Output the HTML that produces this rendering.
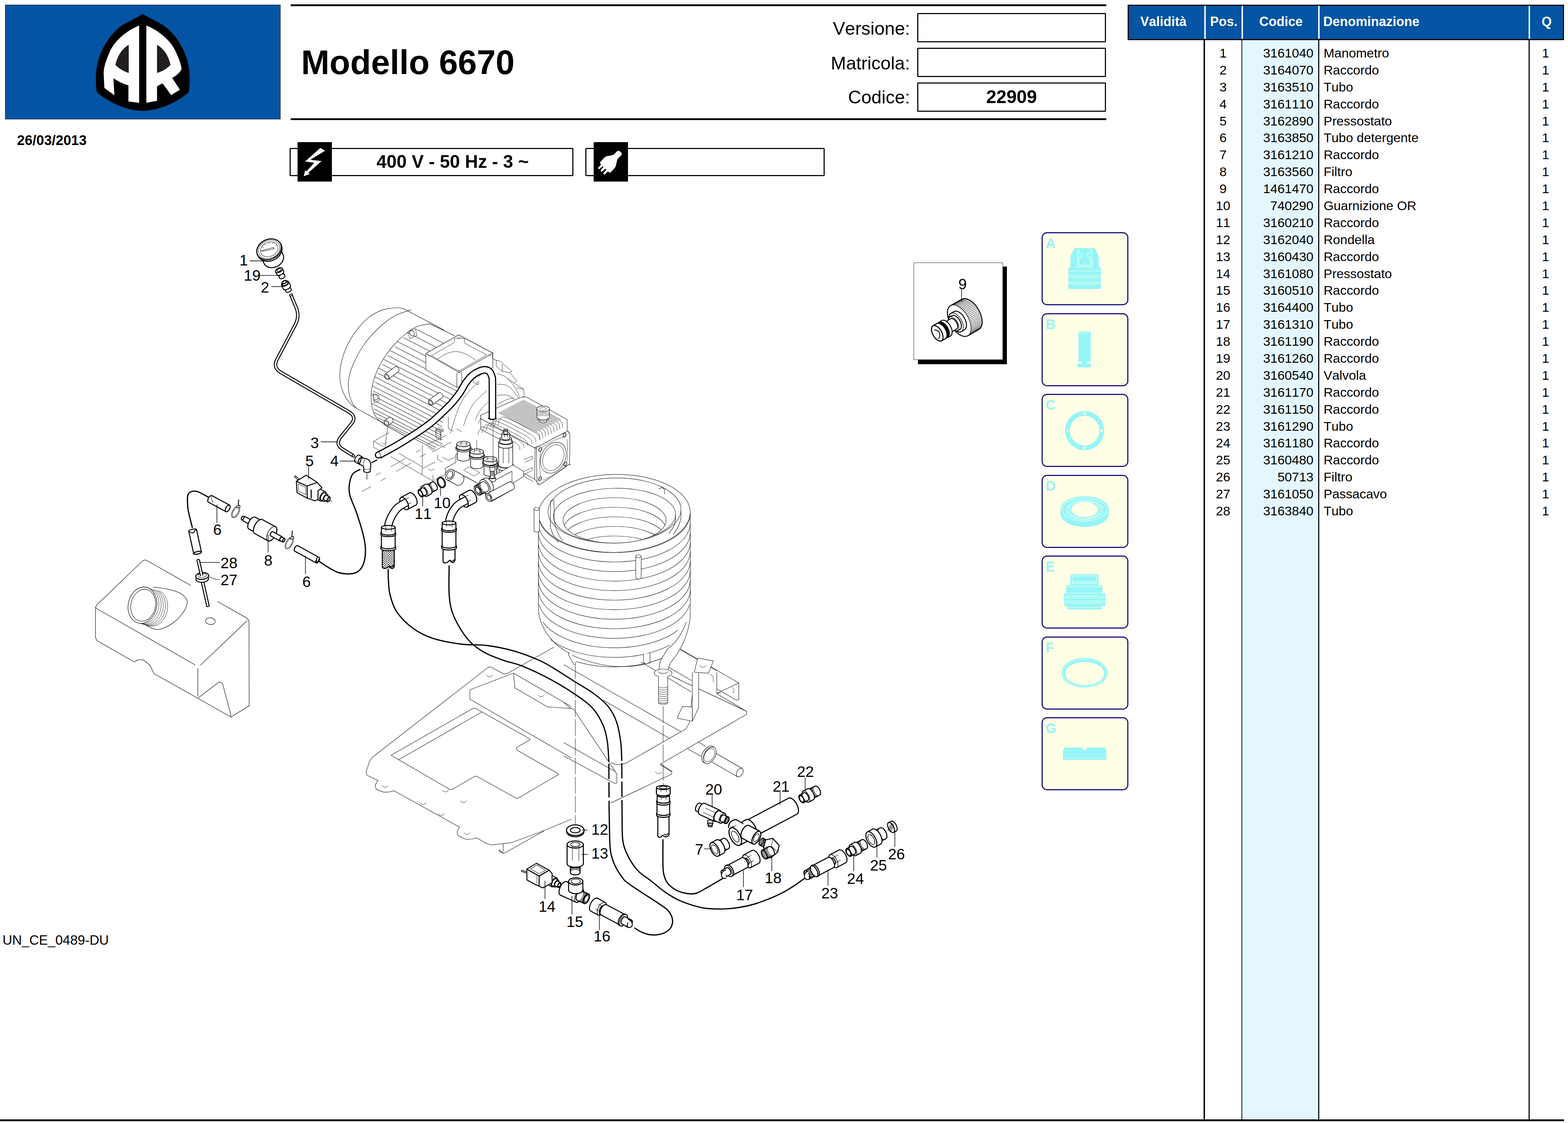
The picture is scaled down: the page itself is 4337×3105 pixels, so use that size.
<!DOCTYPE html>
<html lang="it">
<head>
<meta charset="utf-8">
<title>Modello 6670</title>
<style>
html,body{margin:0;padding:0;background:#fff;}
body{font-kerning:none;width:4337px;height:3105px;position:relative;overflow:hidden;font-family:"Liberation Sans",sans-serif;color:#000;}
.abs{position:absolute;}
#logo{left:14px;top:13px;width:762px;height:317px;background:#0354a3;box-shadow:0 0 0 1px #111 inset;}
.rule{background:#000;height:5px;left:804px;width:2256px;}
#title{left:833px;top:123px;font-size:94px;font-weight:bold;line-height:100px;white-space:nowrap;}
#date{left:47px;top:366px;font-size:38.5px;font-weight:bold;line-height:44px;white-space:nowrap;}
.lbl{width:500px;left:2017px;text-align:right;font-size:50.5px;line-height:64px;white-space:nowrap;}
.inp{left:2537px;width:516px;height:75px;border:3px solid #000;border-radius:2px;text-align:center;font-size:50.5px;font-weight:bold;line-height:73px;}
.vbox{top:409px;height:72px;border:3px solid #000;border-radius:3px;}
.vsq{top:393px;width:95px;height:109px;background:#000;}
#vtxt{left:918px;top:413px;width:668px;text-align:center;font-size:50px;font-weight:bold;line-height:68px;white-space:nowrap;}
#foot{left:7px;top:2578px;font-size:37px;line-height:44px;white-space:nowrap;}
#bottomrule{left:0;top:3095px;width:4326px;height:5px;background:#000;}
/* table */
#thead{left:3119px;top:13px;width:1201px;height:92px;background:#0354a3;border:3px solid #000;}
#thead div{position:absolute;top:0;height:91px;line-height:88px;color:#fff;font-weight:bold;font-size:36px;white-space:nowrap;}
#thead i{position:absolute;top:0;width:4px;height:91px;background:#fff;}
#tbody{left:3119px;top:108px;width:1207px;height:2987px;}
#tbody .col{position:absolute;top:0;height:2987px;}
#tbody .ln{position:absolute;top:0;height:2987px;background:#000;}
.rows{position:absolute;left:0;top:16px;width:1207px;font-size:35.8px;}
.rows div{position:relative;height:46.9px;line-height:47px;white-space:nowrap;}
.rows span{position:absolute;top:0;}
.rows .p{left:214px;width:100px;text-align:center;}
.rows .c{left:316px;width:198px;text-align:right;}
.rows .d{left:542px;}
.rows .q{left:1110px;width:92px;text-align:center;}
/* buttons */
.btn{left:2880.5px;width:234px;height:196px;border:3px solid #0c0c7c;border-radius:15px;background:#ffffe6;}
.btn b{position:absolute;left:9px;top:4px;font-size:38px;line-height:48px;color:#96f5f7;font-weight:bold;}
#p9s{left:2539px;top:737px;width:246px;height:270px;background:#000;}
#p9{left:2527px;top:726px;width:245px;height:267px;background:#fff;border:1.5px solid #222;}
svg{position:absolute;left:0;top:0;overflow:visible;}
</style>
</head>
<body>
<!-- header -->
<div id="logo" class="abs"></div>
<div class="abs rule" style="top:12px"></div>
<div class="abs rule" style="top:327px"></div>
<div id="title" class="abs">Modello 6670</div>
<div id="date" class="abs">26/03/2013</div>
<div class="abs lbl" style="top:47px">Versione:</div>
<div class="abs lbl" style="top:143px">Matricola:</div>
<div class="abs lbl" style="top:237px">Codice:</div>
<div class="abs inp" style="top:36px"></div>
<div class="abs inp" style="top:132px"></div>
<div class="abs inp" style="top:228px">22909</div>
<div class="abs vbox" style="left:801px;width:779px"></div>
<div class="abs vsq" style="left:823px"></div>
<div id="vtxt" class="abs">400 V - 50 Hz - 3 ~</div>
<div class="abs vbox" style="left:1619px;width:656px"></div>
<div class="abs vsq" style="left:1642px"></div>
<div id="foot" class="abs">UN_CE_0489-DU</div>
<div id="bottomrule" class="abs"></div>

<!-- parts table -->
<div id="tbody" class="abs">
<div class="col" style="left:316px;width:212px;background:#e4f7fe"></div>
<div class="ln" style="left:210px;width:4px"></div>
<div class="ln" style="left:314.5px;width:2.5px"></div>
<div class="ln" style="left:527px;width:2.5px"></div>
<div class="ln" style="left:1109px;width:2.5px"></div>
<div class="rows" id="rows">
<div><span class="p">1</span><span class="c">3161040</span><span class="d">Manometro</span><span class="q">1</span></div>
<div><span class="p">2</span><span class="c">3164070</span><span class="d">Raccordo</span><span class="q">1</span></div>
<div><span class="p">3</span><span class="c">3163510</span><span class="d">Tubo</span><span class="q">1</span></div>
<div><span class="p">4</span><span class="c">3161110</span><span class="d">Raccordo</span><span class="q">1</span></div>
<div><span class="p">5</span><span class="c">3162890</span><span class="d">Pressostato</span><span class="q">1</span></div>
<div><span class="p">6</span><span class="c">3163850</span><span class="d">Tubo detergente</span><span class="q">1</span></div>
<div><span class="p">7</span><span class="c">3161210</span><span class="d">Raccordo</span><span class="q">1</span></div>
<div><span class="p">8</span><span class="c">3163560</span><span class="d">Filtro</span><span class="q">1</span></div>
<div><span class="p">9</span><span class="c">1461470</span><span class="d">Raccordo</span><span class="q">1</span></div>
<div><span class="p">10</span><span class="c">740290</span><span class="d">Guarnizione OR</span><span class="q">1</span></div>
<div><span class="p">11</span><span class="c">3160210</span><span class="d">Raccordo</span><span class="q">1</span></div>
<div><span class="p">12</span><span class="c">3162040</span><span class="d">Rondella</span><span class="q">1</span></div>
<div><span class="p">13</span><span class="c">3160430</span><span class="d">Raccordo</span><span class="q">1</span></div>
<div><span class="p">14</span><span class="c">3161080</span><span class="d">Pressostato</span><span class="q">1</span></div>
<div><span class="p">15</span><span class="c">3160510</span><span class="d">Raccordo</span><span class="q">1</span></div>
<div><span class="p">16</span><span class="c">3164400</span><span class="d">Tubo</span><span class="q">1</span></div>
<div><span class="p">17</span><span class="c">3161310</span><span class="d">Tubo</span><span class="q">1</span></div>
<div><span class="p">18</span><span class="c">3161190</span><span class="d">Raccordo</span><span class="q">1</span></div>
<div><span class="p">19</span><span class="c">3161260</span><span class="d">Raccordo</span><span class="q">1</span></div>
<div><span class="p">20</span><span class="c">3160540</span><span class="d">Valvola</span><span class="q">1</span></div>
<div><span class="p">21</span><span class="c">3161170</span><span class="d">Raccordo</span><span class="q">1</span></div>
<div><span class="p">22</span><span class="c">3161150</span><span class="d">Raccordo</span><span class="q">1</span></div>
<div><span class="p">23</span><span class="c">3161290</span><span class="d">Tubo</span><span class="q">1</span></div>
<div><span class="p">24</span><span class="c">3161180</span><span class="d">Raccordo</span><span class="q">1</span></div>
<div><span class="p">25</span><span class="c">3160480</span><span class="d">Raccordo</span><span class="q">1</span></div>
<div><span class="p">26</span><span class="c">50713</span><span class="d">Filtro</span><span class="q">1</span></div>
<div><span class="p">27</span><span class="c">3161050</span><span class="d">Passacavo</span><span class="q">1</span></div>
<div><span class="p">28</span><span class="c">3163840</span><span class="d">Tubo</span><span class="q">1</span></div>
</div>
</div>
<div id="thead" class="abs">
<div style="left:0;width:192px;text-align:center">Validità</div>
<div style="left:213px;width:100px;text-align:center">Pos.</div>
<div style="left:316px;width:210px;text-align:center">Codice</div>
<div style="left:538px">Denominazione</div>
<div style="left:1110px;width:92px;text-align:center">Q</div>
<i style="left:209px"></i><i style="left:312px"></i><i style="left:524px"></i><i style="left:1106px"></i>
</div>

<!-- spare-kit buttons -->
<div class="abs btn" style="top:642px"><b>A</b></div>
<div class="abs btn" style="top:865.5px"><b>B</b></div>
<div class="abs btn" style="top:1089px"><b>C</b></div>
<div class="abs btn" style="top:1312.5px"><b>D</b></div>
<div class="abs btn" style="top:1536px"><b>E</b></div>
<div class="abs btn" style="top:1760px"><b>F</b></div>
<div class="abs btn" style="top:1983px"><b>G</b></div>
<div id="p9s" class="abs"></div>
<div id="p9" class="abs"></div>

<svg id="art" width="4337" height="3105" viewBox="0 0 4337 3105" fill="none" stroke="#000" stroke-linecap="round" stroke-linejoin="round" font-family="Liberation Sans, sans-serif">
<g id="logo-art" transform="translate(200,40) scale(0.1848)" stroke="none">
<path fill="#000" d="M1055,-8 C950,60 820,110 720,180 C540,320 400,560 365,800 C348,900 348,1050 365,1160 C500,1290 800,1442 1055,1442 C1310,1442 1610,1290 1745,1160 C1762,1050 1762,900 1745,800 C1710,560 1570,320 1390,180 C1290,110 1160,60 1055,-8 Z"/>
<path fill="#fff" d="M1000,165 C820,240 640,380 560,560 C500,700 465,800 470,900 L480,1100 L630,1208 L615,955 C700,1010 770,1040 840,1060 L840,1302 L1000,1322 Z"/>
<path fill="#231f20" d="M845,455 C730,520 670,640 645,755 C710,820 780,855 845,875 Z"/>
<path fill="#fff" d="M1108,165 C1290,240 1470,380 1550,560 C1600,670 1630,750 1635,820 C1600,880 1550,920 1495,950 L1610,1125 L1480,1207 L1350,1030 L1268,1075 L1268,1292 L1108,1322 Z"/>
<path fill="#231f20" d="M1268,455 C1385,520 1445,640 1470,755 C1405,820 1335,855 1268,875 Z"/>
</g>
<g id="volt-icon" transform="translate(790,380) scale(0.09255)" stroke="none" fill="#fff">
<path d="M1040,312 L1180,398 L738,668 L1075,705 L680,1055 L720,1090 L540,1158 L585,985 L628,1008 L855,760 L582,718 Z"/>
</g>
<g id="plug-icon" transform="translate(1600,380) scale(0.09255)" stroke="none" fill="#fff">
<path d="M1180,400 C1230,390 1300,450 1295,510 C1270,560 1200,590 1170,650 C1130,720 1140,830 1090,905 L955,1050 C930,1050 900,1030 880,1015 L780,1115 C765,1110 745,1085 745,1065 L835,965 L800,935 L700,1025 C680,1030 665,1020 665,975 L745,885 L725,855 L630,945 C610,950 585,930 580,910 L675,810 C655,790 645,770 645,740 L790,585 C850,540 950,560 1050,510 C1100,480 1130,420 1180,400 Z"/>
</g>
<g id="kits" stroke="none" fill="#96f5f7">
<!-- A: pump head -->
<path d="M2972,686 L3028,686 L3039,708 L3039,738 L3045,741 L3045,796 Q3045,799 3042,799 L2958,799 Q2955,799 2955,796 L2955,741 L2961,738 L2961,708 Z"/>
<g stroke="#f4ffe9" stroke-width="1.6" fill="none">
<path d="M2980,690 L2980,738 L3020,738 L3020,690 M2984,690 L2986,700 L2992,702 L2992,708 L2984,712 L2984,734 L3016,734 L3016,712 L3008,708 L3008,702 L3014,700 L3016,690"/>
<path d="M2957,749 L3043,749 M2957,762 L3043,762 M2957,767 L3043,767 M2957,780 L3043,780 M2957,785 L3043,785"/>
</g>
<!-- B: cylinder -->
<path d="M2983,920 Q2983,917 2986,917 L3014,917 Q3017,917 3017,920 L3017,1000 L3008,1000 L3008,1005 L3017,1005 L3017,1016 L2981,1016 L2981,1005 L2991,1005 L2991,1000 L2983,1000 Z"/>
<path d="M2985,921 L3015,921" stroke="#e8fff0" stroke-width="1.2" fill="none"/>
<!-- C: gasket ring -->
<path fill-rule="evenodd" d="M2946,1190.5 a54,54 0 1,0 108,0 a54,54 0 1,0 -108,0 Z M2959,1190.5 a41,41 0 1,1 82,0 a41,41 0 1,1 -82,0 Z"/>
<g fill="#ffffe6"><circle cx="3000" cy="1143" r="3.4"/><circle cx="3000" cy="1238" r="3.4"/><circle cx="2952.5" cy="1190.5" r="3.4"/><circle cx="3047.500" cy="1190.500" r="3.400"/></g>
<!-- D: seal -->
<path fill-rule="evenodd" d="M2933,1408 a67,36 0 0,1 134,0 L3067,1420 a67,37 0 0,1 -134,0 Z M2963,1409 a37,21 0 1,0 74,0 a37,21 0 1,0 -74,0 Z"/>
<g stroke="#ecfff0" stroke-width="1.6" fill="none"><ellipse cx="3000" cy="1409" rx="62" ry="32"/><ellipse cx="3000" cy="1410" rx="50" ry="27"/><ellipse cx="3000" cy="1410" rx="44" ry="24"/></g>
<!-- E: stacked fitting -->
<path d="M2960,1591 Q2960,1588 2963,1588 L3036,1588 Q3039,1588 3039,1591 L3039,1618 L3049,1618 L3049,1640 L3057,1640 L3057,1676 L3047,1676 L3047,1685 L2952,1685 L2952,1676 L2943,1676 L2943,1640 L2949,1640 L2949,1618 L2960,1618 Z"/>
<g stroke="#ecfff0" stroke-width="1.4" fill="none"><path d="M2962,1592 L3037,1592 M2962,1609 L3037,1609 M2962,1613 L3037,1613 M2951,1622 L3047,1622 M2945,1640 L3055,1640 M2945,1648 L3055,1648 M2945,1653 L3055,1653 M2945,1662 L3055,1662 M2945,1667 L3055,1667 M2954,1680 L3045,1680 M2966,1592 L2966,1608 M3033,1592 L3033,1608"/></g>
<!-- F: O-ring -->
<path fill-rule="evenodd" d="M2936,1860 a64,41 0 1,0 128,0 a64,41 0 1,0 -128,0 Z M2946,1862 a54,32 0 1,1 108,0 a54,32 0 1,1 -108,0 Z"/>
<ellipse cx="3000" cy="1860" rx="60" ry="37" stroke="#ecfff0" stroke-width="1.2" fill="none"/>
<!-- G: plate -->
<path d="M2943,2067 L2994,2067 L2994,2073 L3006,2073 L3006,2067 L3057,2067 L3057,2073 L3060,2073 L3060,2099 Q3060,2101 3058,2101 L2942,2101 Q2940,2101 2940,2099 L2940,2073 L2943,2073 Z"/>
<path d="M2942,2096 L3058,2096" stroke="#ecfff0" stroke-width="1.2" fill="none"/>
</g>
<g id="tank" stroke="#1a1a1a" stroke-width="1.3">
<path d="M539.9,1838.5 L269.6,1684 L264.2,1679.6 L266.6,1673.7 L395.1,1550.1 L401,1548.1 L408.4,1551 L528.1,1619" stroke="#111" stroke-width="1.3" fill="none"/>
<path d="M602,1663.3 L683.2,1709.1 L688.6,1716.5 L689.2,1951.4 L638.9,1982.5 L547.3,1930.7 L426.2,1862.8 L414.3,1839.1 L396.6,1824.4 L381.8,1824.4 L371.5,1830.3 L268.1,1771.2 L264.2,1762.3 L264.2,1681" stroke="#111" stroke-width="1.3" fill="none"/>
<path d="M554.7,1839.1 L683.2,1716.5" stroke="#111" stroke-width="1.3" fill="none"/>
<path d="M547.3,1848 L547.3,1924.8" stroke="#111" stroke-width="1.3" fill="none"/>
<path d="M547.3,1930.2 L606.4,1885.2 L615.3,1889.4 L637.4,1972.1 L638.9,1981.6" stroke="#111" stroke-width="1.3" fill="none"/>
<path d="M423.2,1623.4 C429.1,1624.2 446.8,1625.4 458.7,1627.9 C470.5,1630.3 485,1634 494.1,1638.2 C503.2,1642.4 509.4,1648 513.3,1653 C517.3,1657.9 519,1660.9 517.8,1667.8 C516.5,1674.6 512.8,1685 505.9,1694.3 C499.1,1703.7 487.2,1716.3 476.4,1723.9 C465.6,1731.5 450.8,1738.2 440.9,1740.1 C431.1,1742.1 424.7,1738.4 417.3,1735.7 C409.9,1733 400.1,1725.9 396.6,1723.9" stroke="#111" stroke-width="1.3" fill="none"/>
<ellipse cx="394" cy="1673.4" rx="39.3" ry="50.5" transform="rotate(12 394 1673.4)" stroke="#1a1a1a" stroke-width="1.3" fill="#fff"/>
<path d="M441,1634.1 L447.7,1638.3 L453.5,1644.1 L458.1,1651.3 L461.5,1659.7 L463.4,1668.9 L463.8,1678.7 L462.6,1688.5 L460,1698 L456,1706.9 L450.7,1714.8 L444.5,1721.4 L437.4,1726.5 L429.8,1729.9 L422,1731.4 L414.3,1730.9 L406.9,1728.6" stroke="#1a1a1a" stroke-width="1" fill="none"/>
<path d="M435,1632.5 L441.7,1636.7 L447.5,1642.5 L452.1,1649.7 L455.5,1658.1 L457.4,1667.3 L457.8,1677.1 L456.6,1686.9 L454,1696.4 L450,1705.3 L444.7,1713.2 L438.5,1719.8 L431.4,1724.9 L423.8,1728.3 L416,1729.8 L408.3,1729.3 L400.9,1727" stroke="#1a1a1a" stroke-width="1" fill="none"/>
<path d="M429,1630.9 L435.7,1635.1 L441.5,1640.9 L446.1,1648.1 L449.5,1656.5 L451.4,1665.7 L451.8,1675.5 L450.6,1685.3 L448,1694.8 L444,1703.7 L438.7,1711.6 L432.5,1718.2 L425.4,1723.3 L417.8,1726.7 L410,1728.2 L402.3,1727.7 L394.9,1725.4" stroke="#1a1a1a" stroke-width="1" fill="none"/>
<path d="M423,1629.3 L429.7,1633.5 L435.5,1639.3 L440.1,1646.5 L443.5,1654.9 L445.4,1664.1 L445.8,1673.9 L444.6,1683.7 L442,1693.2 L438,1702.1 L432.7,1710 L426.5,1716.6 L419.4,1721.7 L411.8,1725.1 L404,1726.6 L396.3,1726.1 L388.9,1723.8" stroke="#1a1a1a" stroke-width="1" fill="none"/>
<path d="M417,1627.7 L423.7,1631.9 L429.5,1637.7 L434.1,1644.9 L437.5,1653.3 L439.4,1662.5 L439.8,1672.3 L438.6,1682.1 L436,1691.6 L432,1700.5 L426.7,1708.4 L420.5,1715 L413.4,1720.1 L405.8,1723.5 L398,1725 L390.3,1724.5 L382.9,1722.2" stroke="#1a1a1a" stroke-width="1" fill="none"/>
<ellipse cx="394" cy="1673.4" rx="39.3" ry="50.5" transform="rotate(12 394 1673.4)" stroke="#1a1a1a" stroke-width="1.3" fill="#fff"/>
<ellipse cx="396" cy="1673.4" rx="34" ry="44.5" transform="rotate(12 396 1673.4)" stroke="#1a1a1a" stroke-width="1.3" fill="#fff"/>
<ellipse cx="581.9" cy="1717.4" rx="13.3" ry="9.5" transform="rotate(8 581.9 1717.4)" stroke="#111" stroke-width="1.3" fill="none"/>
</g>
<g id="frame" stroke="#1a1a1a" stroke-width="1.2">
<path d="M1402.6,1862.6 L1393.1,1863.4 L1359.2,1845 L1355.2,1844.2 L1349.8,1845.6 L1030.1,2093.7 L1022,2105.1 L1012.5,2134.9 L1013.9,2141.6 L1016.6,2144.3 L1045,2157.9 L1038.2,2170.1 L1039.1,2178.2 L1042.3,2183.6 L1061.3,2190.4 L1077.5,2189.6 L1089.7,2186.3 L1271.2,2286.9 L1264.4,2297.7 L1265,2305.9 L1268.5,2311.3 L1288.8,2320.8 L1305.1,2320 L1318.6,2316.7 L1344.3,2331.6 L1359.2,2336.2 L1413.4,2330.2 L1494.7,2300.5 L1580,2265.2" stroke="#1a1a1a" stroke-width="1.2" fill="none"/>
<path d="M1402.6,1862.6 L1548.8,1780" stroke="#1a1a1a" stroke-width="1.2" fill="none"/>
<path d="M1391.7,2333 L1391.7,2354.6 M1380.9,2349.2 L1393.1,2360 L1504.2,2297.7 M1380.9,2349.2 L1380.9,2354.1 L1393.1,2360" stroke="#1a1a1a" stroke-width="1.2" fill="none"/>
<path d="M1420.2,1861.3 L1301,1906.8 L1299.6,1910 L1299.6,1933 L1580,2095.6" stroke="#1a1a1a" stroke-width="1.2" fill="none"/>
<path d="M1420.2,1861.3 L1424.2,1901.9 L1515,1954.7 L1580,1958.8" stroke="#1a1a1a" stroke-width="1.2" fill="none"/>
<path d="M1420.2,1861.3 L1580,1953.4" stroke="#1a1a1a" stroke-width="1.2" fill="none"/>
<path d="M1315.9,1958.8 L1309.1,1958.2 L1081.6,2088.3 L1244.1,2182.8 L1250.9,2182.8 L1313.2,2146.2 L1320,2147 L1427,2206.6 L1433.7,2206.6 L1544.8,2141.6 L1543.4,2138.9 L1429.7,2073.9 L1428.3,2067.1 L1466.2,2045.5 L1464.9,2042.8 Z" stroke="#1a1a1a" stroke-width="1.2" fill="none"/>
<path d="M1332.1,1969.1 L1101.9,2101" stroke="#1a1a1a" stroke-width="1.2" fill="none"/>
<path d="M1345.8,1866.2 a8,5 0 0 0 16,0 M1488.8,1921.2 a8,5 0 0 0 16,0 M1056.5,2171.8 a8,5 0 0 0 16,0 M1223.9,2184.5 a8,5 0 0 0 16,0 M1274,2213.8 a8,5 0 0 0 16,0 M1161.6,2219.5 a8,5 0 0 0 16,0 M1212.5,2249.3 a8,5 0 0 0 16,0 M1283.5,2302.2 a8,5 0 0 0 16,0 M1813.4,2134.4 a8,5 0 0 0 16,0" stroke="#1a1a1a" stroke-width="1" fill="none"/>
<path d="M1879.6,1793.5 L2043.5,1888.4 L2043.5,1934.4 L2036.7,1935.8 L1982.6,1904.6" stroke="#1a1a1a" stroke-width="1.2" fill="none"/>
<path d="M1982.6,1916.8 L2043.5,1888.4 M1982.6,1858.6 L1982.6,1916.8 L1993.4,1915.4 M1882.3,1796.8 L1982.6,1854.5" stroke="#1a1a1a" stroke-width="1.2" fill="none"/>
<path d="M1963.6,1865.3 C1965,1866 1970.2,1866 1971.7,1869.4 C1973.3,1872.8 1972.9,1882.9 1973.1,1885.6" stroke="#1a1a1a" stroke-width="1" fill="none"/>
<path d="M2024.6,1899.2 C2025.5,1900.5 2029.5,1904.4 2030,1907.3 C2030.4,1910.2 2027.7,1915.2 2027.3,1916.8" stroke="#1a1a1a" stroke-width="1" fill="none"/>
<path d="M1560,1838.2 L1882.3,2022.4" stroke="#1a1a1a" stroke-width="1.2" fill="none"/>
<path d="M1668.4,1935.8 L1851.2,2041.4" stroke="#1a1a1a" stroke-width="1.2" fill="none"/>
<path d="M1803.8,1817.9 L1912.1,1881.6 M1765.9,1826 L1912.1,1912.7" stroke="#1a1a1a" stroke-width="1.2" fill="none"/>
<path d="M1858,1869.4 L2065.2,1966.9 L2065.2,1975 M1982.6,1918.1 L2065.2,1966.9" stroke="#1a1a1a" stroke-width="1.2" fill="none"/>
<path d="M1914.9,1920.9 C1913.9,1929 1910.8,1957 1909.4,1969.6 C1908.1,1982.3 1909,1989 1906.7,1996.7 C1904.5,2004.4 1900,2011.2 1895.9,2015.7 C1891.8,2020.2 1884.6,2022.4 1882.3,2023.8 M1882.3,2023.8 L1733.4,2109.1 M1733.4,2109.1 C1729.8,2110 1718.9,2114.5 1711.7,2114.5 C1704.5,2114.5 1693.6,2110 1690,2109.1" stroke="#1a1a1a" stroke-width="1.2" fill="none"/>
<path d="M2065.2,1975 L1826.8,2112.6 L1858,2132.1 L1858,2140.3 L1690,2219.9" stroke="#1a1a1a" stroke-width="1.2" fill="none"/>
<path d="M1826.8,2112.6 L1826.8,2114.8 L1858,2134.3" stroke="#1a1a1a" stroke-width="1.2" fill="none"/>
<path d="M1560,1942.5 L1576.3,1957.4 L1587.1,1961.5" stroke="#1a1a1a" stroke-width="1.2" fill="none"/>
<path d="M1587.1,1961.5 L1706.3,2140.3 L1706.3,2164.6 L1699.5,2166 L1560,2090.2" stroke="#1a1a1a" stroke-width="1.2" fill="none"/>
<path d="M1560,2053.6 L1699.5,2132.1" stroke="#1a1a1a" stroke-width="1.2" fill="none"/>
<path d="M1929.8,1819.3 L1973.1,1827.4 L1959.5,1861.3 L1920.3,1858.6 Z" stroke="#1a1a1a" stroke-width="1.2" fill="#fff"/>
<path d="M1935.2,1839.6 a9,5 0 0 0 18,0" stroke="#1a1a1a" stroke-width="1" fill="none"/>
<path d="M1914.9,1858.6 L1914.9,1994 L1932.5,1956.1 L1932.5,1861.3" stroke="#1a1a1a" stroke-width="1.2" fill="#fff"/>
<path d="M1887.8,1953.4 L1914.9,1954.7 L1914.9,1994 L1874.2,1985.9 L1874.2,1981.8 Z" stroke="#1a1a1a" stroke-width="1.2" fill="#fff"/>
<path d="M1931.1,2050.9 L1950.1,2063.1 M1901.3,2069.8 L1939.2,2091.5" stroke="#1a1a1a" stroke-width="1.2" fill="none"/>
<path d="M2052.8,2124.8 L1966.2,2074.8 A13.2,8.7 -60 0 0 1953,2097.6 L2039.6,2147.6 A13.2,8.7 -60 0 0 2052.8,2124.8 Z" stroke="#000" stroke-width="1.2" fill="#fff"/>
<path d="M2052.8,2124.8 A13.2,8.7 -60 0 0 2039.6,2147.6" stroke="#000" stroke-width="1.2" fill="none"/>
<path d="M1975.7,2066.4 L1971.3,2063.9 A25.5,15.8 -60 0 0 1945.8,2108 L1950.2,2110.5 A25.5,15.8 -60 0 0 1975.7,2066.4 Z" stroke="#000" stroke-width="1.2" fill="#fff"/>
<path d="M1975.7,2066.4 A25.5,15.8 -60 0 0 1950.2,2110.5" stroke="#000" stroke-width="1.2" fill="none"/>
<ellipse cx="1961.9" cy="2087.9" rx="12.5" ry="20" transform="rotate(30 1961.9 2087.9)" stroke="#1a1a1a" stroke-width="1" fill="none"/>
<path d="M1591.3,1830 L1591.3,2285" stroke="#1a1a1a" stroke-width="1.1" fill="none" stroke-dasharray="46 7 "/>
<path d="M1834.3,1953 L1834.3,2172" stroke="#1a1a1a" stroke-width="1.1" fill="none" stroke-dasharray="46 7"/>
</g>
<g id="motor" stroke="#1a1a1a" stroke-width="1.25">
<path d="M1117,854 C1113.8,853.5 1107.2,850.3 1097.3,850.8 C1087.5,851.3 1071.1,852.2 1057.9,856.9 C1044.8,861.7 1030.8,869.3 1018.5,879.1 C1006.2,889 994.3,902.1 984,916.1 C973.8,930 963.9,946.8 956.9,962.9 C950,978.9 944.8,996.9 942.2,1012.1 C939.5,1027.3 939.3,1040.8 940.9,1054 C942.6,1067.1 947.3,1080.7 952,1090.9 C956.7,1101.2 963.5,1109.2 969.3,1115.6 C975,1121.9 983.6,1126.8 986.5,1129.1" stroke="#1a1a1a" stroke-width="1.2" fill="none"/>
<path d="M1136.7,856.9 C1129.4,859.6 1107.2,864.7 1092.4,873 C1077.6,881.2 1062,893.3 1048.1,906.2 C1034.1,919.1 1020.2,934.5 1008.7,950.5 C997.2,966.5 986.5,985.8 979.1,1002.3 C971.7,1018.7 966.6,1034.7 964.3,1049.1 C962.1,1063.4 963.7,1077.4 965.6,1088.5 C967.4,1099.6 971.9,1108.8 975.4,1115.6 C978.9,1122.3 984.7,1126.8 986.5,1129.1" stroke="#1a1a1a" stroke-width="1.2" fill="none"/>
<path d="M1117,854 L1227.9,912.4" stroke="#1a1a1a" stroke-width="1.2" fill="none"/>
<path d="M986.5,1129.1 L1061.6,1171" stroke="#1a1a1a" stroke-width="1.2" fill="none"/>
<path d="M1188.5,895.1 C1182.3,896.6 1162.6,899 1151.5,903.7 C1140.4,908.5 1131.8,915.6 1122,923.4 C1112.1,931.2 1101.9,940.3 1092.4,950.5 C1083,960.8 1073.5,972.7 1065.3,985 C1057.1,997.3 1049.1,1010.9 1043.2,1024.4 C1037.2,1038 1032.4,1054.8 1029.6,1066.3 C1026.8,1077.8 1026.4,1083.1 1026.4,1093.4 C1026.4,1103.7 1026.8,1117.2 1029.6,1127.9 C1032.4,1138.5 1036.8,1149.2 1043.2,1157.4 C1049.5,1165.6 1063.7,1173.9 1067.8,1177.1" stroke="#1a1a1a" stroke-width="1.2" fill="#fff"/>
<path d="M1188.5,895.1 L1257.4,928.4" stroke="#1a1a1a" stroke-width="1.2" fill="none"/>
<path d="M1067.8,1177.1 L1131.8,1211.6" stroke="#1a1a1a" stroke-width="1.2" fill="none"/>
<path d="M1150.5,909.7 L1284,978.4 M1127.7,919.6 L1265.6,990.7 M1117.2,934.2 L1250.7,1002.9 M1099.4,944.2 L1237.3,1015.2 M1092.2,958.7 L1225.7,1027.5 M1078.1,968.7 L1272.7,1068.9 M1072.9,983.2 L1263.1,1081.2 M1060.7,993.2 L1255.3,1093.4 M1058.2,1007.8 L1248.4,1105.7 M1046.9,1017.7 L1241.5,1117.9 M1045.8,1032.3 L1235.9,1130.2 M1037.4,1042.3 L1232,1142.5 M1037.8,1056.8 L1228,1154.7 M1029.5,1066.8 L1224.1,1167 M1032.5,1081.3 L1222.7,1179.3 M1026.6,1091.3 L1221.2,1191.5 M1031.8,1105.8 L1221.9,1203.8 M1028.5,1115.8 L1223.1,1216 M1034.1,1130.4 L1224,1228.2 M1035.3,1140.4 L1214.9,1232.8 M1045.4,1154.9 L1205.8,1237.5 M1052.5,1164.9 L1202.6,1242.2" stroke="#1a1a1a" stroke-width="1.1" fill="none"/>
<path d="M1074.7,1048.3 L1102.3,1027.6 A8.3,6 53.1 0 0 1092.4,1014.3 L1064.8,1035 A8.3,6 53.1 0 0 1074.7,1048.3 Z" stroke="#000" stroke-width="1.2" fill="#fff"/>
<path d="M1074.7,1048.3 A8.3,6 53.1 0 0 1064.8,1035" stroke="#000" stroke-width="1.2" fill="none"/>
<ellipse cx="1069.8" cy="1041.7" rx="4.2" ry="5.5" transform="rotate(-35 1069.8 1041.7)" stroke="#1a1a1a" stroke-width="1" fill="none"/>
<path d="M1195.9,1119.7 L1223.5,1099 A8.3,6 53.1 0 0 1213.5,1085.8 L1186,1106.5 A8.3,6 53.1 0 0 1195.9,1119.7 Z" stroke="#000" stroke-width="1.2" fill="#fff"/>
<path d="M1195.9,1119.7 A8.3,6 53.1 0 0 1186,1106.5" stroke="#000" stroke-width="1.2" fill="none"/>
<ellipse cx="1190.9" cy="1113.1" rx="4.2" ry="5.5" transform="rotate(-35 1190.9 1113.1)" stroke="#1a1a1a" stroke-width="1" fill="none"/>
<path d="M1074,1176.4 L1085.8,1167.5 A8.3,6 53.1 0 0 1075.9,1154.2 L1064,1163.1 A8.3,6 53.1 0 0 1074,1176.4 Z" stroke="#000" stroke-width="1.2" fill="#fff"/>
<path d="M1074,1176.4 A8.3,6 53.1 0 0 1064,1163.1" stroke="#000" stroke-width="1.2" fill="none"/>
<ellipse cx="1069" cy="1169.7" rx="4.2" ry="5.5" transform="rotate(-35 1069 1169.7)" stroke="#1a1a1a" stroke-width="1" fill="none"/>
<ellipse cx="1139.7" cy="921.5" rx="6" ry="8" transform="rotate(-35 1139.7 921.5)" stroke="#1a1a1a" stroke-width="1.2" fill="#fff"/>
<path d="M1128.1,917.3 L1149.1,908.7 L1152.8,928.4 L1134.3,935.8 Z" stroke="#1a1a1a" stroke-width="1" fill="none"/>
<ellipse cx="1038.7" cy="1098.3" rx="6" ry="8" transform="rotate(-35 1038.7 1098.3)" stroke="#1a1a1a" stroke-width="1.2" fill="#fff"/>
<path d="M1032.1,1088.5 L1048.1,1093.4 L1049.3,1108.2 L1035.8,1114.3 Z" stroke="#1a1a1a" stroke-width="1" fill="none"/>
<path d="M1177.9,977.6 L1268.5,925.9 L1363.3,976.4 L1363.3,1017 L1277.1,1066.3 L1263.6,1071.2 L1177.9,1022 Z" stroke="#1a1a1a" stroke-width="1.2" fill="#fff"/>
<path d="M1177.9,977.6 L1268.5,925.9 L1363.3,976.4 L1269.7,1029.4 Z" stroke="#1a1a1a" stroke-width="1.2" fill="#fff"/>
<path d="M1193.4,983.1 L1256.9,946.8 L1256.9,935.8 L1284.5,935.8 L1284.5,948.1 L1346.1,981.3 L1272.2,1024.4 L1266.1,1024.4 Z" stroke="#1a1a1a" stroke-width="1" fill="none"/>
<path d="M1263.6,1031.8 L1263.6,1071.2" stroke="#1a1a1a" stroke-width="1.2" fill="none"/>
<path d="M1277.1,1029.4 L1277.1,1066.3" stroke="#1a1a1a" stroke-width="1.2" fill="none"/>
<path d="M1210.6,992.4 C1213.9,990.4 1223.4,983.4 1230.3,980.1 C1237.3,976.8 1245.1,973.7 1252.5,972.7 C1259.9,971.7 1267.7,972.3 1274.7,973.9 C1281.7,975.6 1287.8,979.1 1294.4,982.6 C1300.9,986 1310.8,992.8 1314.1,994.9" stroke="#1a1a1a" stroke-width="1" fill="none"/>
<path d="M1183.2,980.6 a4,2.5 0 0 0 8,0" stroke="#1a1a1a" stroke-width="0.9" fill="none"/>
<path d="M1265.7,932.8 a4,2.5 0 0 0 8,0" stroke="#1a1a1a" stroke-width="0.9" fill="none"/>
<path d="M1349.5,980.1 a4,2.5 0 0 0 8,0" stroke="#1a1a1a" stroke-width="0.9" fill="none"/>
<path d="M1265.7,1028.1 a4,2.5 0 0 0 8,0" stroke="#1a1a1a" stroke-width="0.9" fill="none"/>
<path d="M1362.2,974.8 L1362.2,992.9 L1372.7,995.8 L1383.2,998.7 L1390.9,1005.7 L1415.7,1026.4 L1410,1030.2 L1429.1,1053.1 L1421.4,1058.8 L1448.1,1076 L1450.1,1095.1 L1440.5,1099.8" stroke="#1a1a1a" stroke-width="1" fill="none"/>
<path d="M1372.7,995.8 L1372.7,1013 L1389,1026.4 L1389,1007.3 M1389,1026.4 L1410,1030.2 M1402.3,1045.4 L1421.4,1058.8 M1429.1,1072.2 L1448.1,1076" stroke="#1a1a1a" stroke-width="1" fill="none"/>
<path d="M1375.6,1034 C1378.8,1034.9 1388.3,1035.9 1394.7,1039.7 C1401.1,1043.5 1408.1,1050.2 1413.8,1056.9 C1419.5,1063.6 1425.2,1073.1 1429.1,1079.8 C1432.9,1086.5 1435.4,1094.1 1436.7,1097" stroke="#1a1a1a" stroke-width="1" fill="none"/>
<path d="M1375.6,1062.6 C1379.4,1062.9 1391.8,1062.3 1398.5,1064.5 C1405.2,1066.8 1410.9,1071.5 1415.7,1076 C1420.5,1080.4 1423.3,1086.5 1427.1,1091.3 C1431,1096 1436.7,1102.4 1438.6,1104.6" stroke="#1a1a1a" stroke-width="1" fill="none"/>
<path d="M1375.6,1093.2 C1379.4,1093 1392.2,1091.4 1398.5,1092.2 C1404.9,1093 1409.6,1095.7 1413.8,1097.9 C1417.9,1100.2 1421.7,1104.3 1423.3,1105.6" stroke="#1a1a1a" stroke-width="1" fill="none"/>
<path d="M1375.6,1118 C1380.1,1115.7 1394.7,1107.5 1402.3,1104.6 C1410,1101.7 1418.2,1101.4 1421.4,1100.8" stroke="#1a1a1a" stroke-width="1" fill="none"/>
<path d="M1322.2,1056.9 C1318.3,1060.7 1306.3,1071.8 1299.3,1079.8 C1292.3,1087.8 1285.9,1095.1 1280.2,1104.6 C1274.4,1114.2 1269,1126.9 1264.9,1137.1 C1260.8,1147.2 1258.5,1155.5 1255.4,1165.7 C1252.2,1175.9 1247.4,1192.7 1245.8,1198.1" stroke="#1a1a1a" stroke-width="1" fill="none"/>
<path d="M1347,1079.8 C1343.2,1083.3 1330.8,1094.1 1324.1,1100.8 C1317.4,1107.5 1312.3,1111.6 1306.9,1119.9 C1301.5,1128.2 1295.8,1140.9 1291.6,1150.4 C1287.5,1160 1283.7,1172.7 1282.1,1177.1" stroke="#1a1a1a" stroke-width="1" fill="none"/>
<path d="M1352.7,1110.3 C1350.2,1112.6 1342.2,1118.6 1337.4,1123.7 C1332.7,1128.8 1327.9,1134.5 1324.1,1140.9 C1320.3,1147.2 1316.1,1158.4 1314.5,1161.9" stroke="#1a1a1a" stroke-width="1" fill="none"/>
<path d="M1350.8,1140.9 C1347.9,1142.8 1338.4,1147.6 1333.6,1152.3 C1328.8,1157.1 1324.1,1166.6 1322.2,1169.5" stroke="#1a1a1a" stroke-width="1" fill="none"/>
<path d="M1309.8,1049.3 L1309.8,1056.9 L1322.2,1064.5 L1322.2,1053.1 M1205.7,1190.5 L1205.7,1209.6 L1219.1,1217.2 L1219.1,1196.2 L1205.7,1190.5 L1213.4,1185.7 L1226.7,1192.4 L1219.1,1196.2" stroke="#1a1a1a" stroke-width="1" fill="none"/>
<path d="M1240.1,1152.3 L1240.1,1184.8 L1253.4,1192.4 M1263,1186.7 L1276.4,1193.4" stroke="#1a1a1a" stroke-width="1" fill="none"/>
<path d="M1073,1177.7 L1064.7,1236.8 M1033.3,1236.8 L1033.3,1220.2 L1075.8,1196.2 M1033.3,1220.2 L1061,1235 M1033.3,1236.8 L1059.1,1250.7" stroke="#1a1a1a" stroke-width="1" fill="none"/>
<path d="M1055.4,1223 a7,4 0 0 0 14,0" stroke="#1a1a1a" stroke-width="0.9" fill="none"/>
<path d="M1081.3,1262.7 L1167.2,1312.6 L1197.7,1330.1 L1231,1311.7 M1167.2,1312.6 L1167.2,1296 L1203.2,1277.5 M1197.7,1330.1 L1197.7,1313.5 M1103.5,1253.5 L1167.2,1290.4" stroke="#1a1a1a" stroke-width="1" fill="none"/>
<path d="M1184.8,1296 a8,4.5 0 0 0 16,0" stroke="#1a1a1a" stroke-width="0.9" fill="none"/>
<path d="M1205.1,1187 L1205.1,1201.7 L1218,1209.1 L1218,1193.4 Z M1205.1,1187 L1214.3,1181.4 L1227.3,1188.8 L1218,1193.4 M1210.6,1257.2 L1210.6,1270.1 L1223.6,1277.5 M1223.6,1264.6 L1240.2,1272.9 L1258.7,1262.7" stroke="#1a1a1a" stroke-width="1" fill="none"/>
<path d="M1081.3,1290.4 L1121.9,1267.3 M1096.1,1303.4 L1136.7,1280.3 M1000,1358.8 L1025.9,1345.8 M1039.7,1314.4 L1052.7,1307 M1053.6,1329.2 L1066.5,1321.8 M1150.6,1250.7 L1162.6,1243.3 M1162.6,1262.7 L1177.4,1255.3 M1181.1,1229.4 L1234.6,1203.6 M1195.8,1249.8 L1247.6,1222.1 M1184.8,1236.8 L1199.5,1246.1 M1216.2,1229.4 L1231,1237.8" stroke="#1a1a1a" stroke-width="1" fill="none"/>
<path d="M1014.8,1310.7 L1014.8,1325.5 M1168.1,1231.3 L1168.1,1294.1" stroke="#1a1a1a" stroke-width="1" fill="none"/>
</g>
<g id="pump" stroke="#1a1a1a" stroke-width="1.2">
<path d="M1329.8,1147.8 L1440.6,1098.5 L1455.4,1097.3 L1568.7,1160.1 L1568.7,1197 L1485,1241.4 L1329.8,1157.6 Z" stroke="#1a1a1a" stroke-width="1.2" fill="#fff"/>
<path d="M1329.8,1147.8 L1329.8,1187.2 L1386.4,1216.7" stroke="#1a1a1a" stroke-width="1.2" fill="none"/>
<path d="M1379.1,1140.9 C1387.9,1145.4 1414.4,1159.1 1432,1168.2 C1449.7,1177.3 1475.1,1189.9 1485,1195.6 C1494.8,1201.3 1489.7,1199.3 1491.1,1202.5 C1492.6,1205.7 1493.2,1212.7 1493.6,1214.8 M1383,1138.9 L1487.4,1192.9 M1386.9,1136.8 C1395.8,1141.4 1422.2,1155 1439.9,1164.2 C1457.5,1173.3 1483,1185.8 1492.8,1191.5 C1502.7,1197.2 1497.6,1195.2 1499,1198.4 C1500.4,1201.6 1501.1,1208.7 1501.5,1210.7 M1390.9,1134.8 L1495.3,1188.8 M1394.8,1132.8 C1403.6,1137.3 1430.1,1151 1447.8,1160.1 C1465.4,1169.2 1490.9,1181.7 1500.7,1187.4 C1510.6,1193.1 1505.5,1191.1 1506.9,1194.3 C1508.3,1197.5 1508.9,1204.6 1509.4,1206.6 M1398.8,1130.8 L1503.2,1184.7 M1402.7,1128.7 C1411.5,1133.2 1438,1146.9 1455.7,1156 C1473.3,1165.1 1498.8,1177.7 1508.6,1183.4 C1518.5,1189.1 1513.3,1187.1 1514.8,1190.3 C1516.2,1193.5 1516.8,1200.5 1517.2,1202.6 M1406.6,1126.7 L1511.1,1180.7 M1410.6,1124.6 C1419.4,1129.2 1445.9,1142.9 1463.5,1152 C1481.2,1161.1 1506.6,1173.6 1516.5,1179.3 C1526.3,1185 1521.2,1183 1522.7,1186.2 C1524.1,1189.4 1524.7,1196.5 1525.1,1198.5 M1414.5,1122.7 L1519,1176.6 M1418.5,1120.6 C1427.3,1125.1 1453.8,1138.8 1471.4,1147.9 C1489.1,1157 1514.5,1169.5 1524.4,1175.2 C1534.2,1180.9 1529.1,1178.9 1530.5,1182.1 C1532,1185.3 1532.6,1192.4 1533,1194.5 M1422.4,1118.6 L1526.8,1172.5 M1426.3,1116.5 C1435.2,1121.1 1461.7,1134.7 1479.3,1143.8 C1497,1153 1522.4,1165.5 1532.3,1171.2 C1542.1,1176.9 1537,1174.9 1538.4,1178.1 C1539.9,1181.3 1540.5,1188.3 1540.9,1190.4 M1430.3,1114.5 L1534.7,1168.5 M1434.2,1112.4 C1443.1,1117 1469.5,1130.7 1487.2,1139.8 C1504.8,1148.9 1530.3,1161.4 1540.1,1167.1 C1550,1172.8 1544.9,1170.8 1546.3,1174 C1547.7,1177.2 1548.3,1184.3 1548.8,1186.3 M1438.2,1110.5 L1542.6,1164.4 M1442.1,1108.4 C1450.9,1112.9 1477.4,1126.6 1495.1,1135.7 C1512.7,1144.8 1538.2,1157.3 1548,1163.1 C1557.9,1168.8 1552.7,1166.7 1554.2,1169.9 C1555.6,1173.1 1556.2,1180.2 1556.6,1182.3 M1446.1,1106.4 L1550.5,1160.3" stroke="#1a1a1a" stroke-width="1" fill="none"/>
<path d="M1322.4,1202 C1323.2,1199.5 1323.6,1190.5 1327.3,1187.2 C1331,1183.9 1328.2,1176.1 1344.6,1182.3 C1361,1188.4 1410.3,1213.9 1425.9,1224.1 C1441.5,1234.4 1436.1,1240.6 1438.2,1243.8 M1333.5,1196.5 C1334.3,1194.1 1334.7,1185.1 1338.4,1181.8 C1342.1,1178.5 1339.2,1170.7 1355.7,1176.8 C1372.1,1183 1421.3,1208.5 1436.9,1218.7 C1452.5,1229 1447.2,1235.1 1449.3,1238.4 M1344.6,1191.1 C1345.4,1188.7 1345.8,1179.6 1349.5,1176.4 C1353.2,1173.1 1350.3,1165.3 1366.7,1171.4 C1383.2,1177.6 1432.4,1203 1448,1213.3 C1463.6,1223.6 1458.3,1229.7 1460.3,1233 M1355.7,1185.7 C1356.5,1183.2 1356.9,1174.2 1360.6,1170.9 C1364.3,1167.6 1361.4,1159.8 1377.8,1166 C1394.2,1172.2 1443.5,1197.6 1459.1,1207.9 C1474.7,1218.1 1469.4,1224.3 1471.4,1227.6 M1366.7,1180.3 C1367.6,1177.8 1368,1168.8 1371.7,1165.5 C1375.4,1162.2 1372.5,1154.4 1388.9,1160.6 C1405.3,1166.7 1454.6,1192.2 1470.2,1202.5 C1485.8,1212.7 1480.5,1218.9 1482.5,1222.2 M1377.8,1174.9 C1378.6,1172.4 1379.1,1163.4 1382.8,1160.1 C1386.4,1156.8 1383.6,1149 1400,1155.2 C1416.4,1161.3 1465.7,1186.8 1481.3,1197 C1496.9,1207.3 1491.5,1213.5 1493.6,1216.7" stroke="#1a1a1a" stroke-width="1" fill="none"/>
<path d="M1493.6,1232.8 C1507,1224.7 1551.9,1200.5 1565,1194.6 C1578.2,1188.6 1570.6,1195.4 1572.4,1197 C1574.3,1198.7 1575.7,1190.7 1576.1,1204.4 C1576.5,1218.2 1575.9,1265.8 1574.9,1279.6 C1573.8,1293.3 1582.9,1277.4 1569.9,1286.9 C1557,1296.5 1510.6,1328.7 1497.3,1336.9 C1483.9,1345.1 1491.9,1337.3 1489.9,1336.2 C1487.9,1335.1 1486.4,1345.6 1485.5,1330 C1484.6,1314.4 1483.1,1258.8 1484.5,1242.6 C1485.8,1226.4 1480.2,1240.8 1493.6,1232.8 Z" stroke="#1a1a1a" stroke-width="1.2" fill="#fff"/>
<path d="M1493.6,1232.8 L1480,1236.4 L1478.8,1325.1 L1485.5,1332.5" stroke="#1a1a1a" stroke-width="1.2" fill="none"/>
<path d="M1478.8,1325.1 L1450.5,1309.1" stroke="#1a1a1a" stroke-width="1.2" fill="none"/>
<ellipse cx="1530.5" cy="1265.5" rx="33" ry="45" transform="rotate(27 1530.5 1265.5)" stroke="#1a1a1a" stroke-width="1.2" fill="none"/>
<ellipse cx="1530.5" cy="1265.5" rx="27" ry="38" transform="rotate(27 1530.5 1265.5)" stroke="#1a1a1a" stroke-width="1" fill="none"/>
<ellipse cx="1561.3" cy="1203.2" rx="4.2" ry="6.5" transform="rotate(27 1561.3 1203.2)" stroke="#1a1a1a" stroke-width="1.2" fill="none"/>
<ellipse cx="1561.3" cy="1203.2" rx="2.4" ry="4" transform="rotate(27 1561.3 1203.2)" stroke="#1a1a1a" stroke-width="0.9" fill="none"/>
<ellipse cx="1494.3" cy="1242.6" rx="4.2" ry="6.5" transform="rotate(27 1494.3 1242.6)" stroke="#1a1a1a" stroke-width="1.2" fill="none"/>
<ellipse cx="1494.3" cy="1242.6" rx="2.4" ry="4" transform="rotate(27 1494.3 1242.6)" stroke="#1a1a1a" stroke-width="0.9" fill="none"/>
<ellipse cx="1493.6" cy="1323.9" rx="4.2" ry="6.5" transform="rotate(27 1493.6 1323.9)" stroke="#1a1a1a" stroke-width="1.2" fill="none"/>
<ellipse cx="1493.6" cy="1323.9" rx="2.4" ry="4" transform="rotate(27 1493.6 1323.9)" stroke="#1a1a1a" stroke-width="0.9" fill="none"/>
<ellipse cx="1563.8" cy="1283.2" rx="4.2" ry="6.5" transform="rotate(27 1563.8 1283.2)" stroke="#1a1a1a" stroke-width="1.2" fill="none"/>
<ellipse cx="1563.8" cy="1283.2" rx="2.4" ry="4" transform="rotate(27 1563.8 1283.2)" stroke="#1a1a1a" stroke-width="0.9" fill="none"/>
<path d="M1499.7,1236.4 C1505.5,1233.2 1524.8,1221.3 1534.2,1216.7 C1543.7,1212.2 1552.7,1210.6 1556.4,1209.4" stroke="#1a1a1a" stroke-width="0.9" fill="none"/>
<path d="M1494.8,1248.8 C1494.4,1254.5 1492.4,1271.8 1492.4,1283.2 C1492.4,1294.7 1494.4,1312 1494.8,1317.7" stroke="#1a1a1a" stroke-width="0.9" fill="none"/>
<path d="M1502.2,1327.6 C1507.5,1324.7 1523.6,1316.9 1534.2,1310.3 C1544.9,1303.8 1560.9,1291.9 1566.2,1288.2" stroke="#1a1a1a" stroke-width="0.9" fill="none"/>
<path d="M1568.7,1214.3 C1568.9,1219.6 1569.9,1236 1569.9,1246.3 C1569.9,1256.6 1568.9,1270.9 1568.7,1275.9" stroke="#1a1a1a" stroke-width="0.9" fill="none"/>
<path d="M1492.2,1157.5 L1492.2,1164.5 A10,4.5 180 0 0 1512.2,1164.5 L1512.2,1157.5 A10,4.5 180 0 0 1492.2,1157.5 Z" stroke="#000" stroke-width="1.2" fill="#fff"/>
<path d="M1492.2,1157.5 A10,4.5 180 0 0 1512.2,1157.5" stroke="#000" stroke-width="1.6" fill="none"/>
<path d="M1487.2,1152.5 L1487.2,1157.5 A15,6.8 180 0 0 1517.2,1157.5 L1517.2,1152.5 A15,6.8 180 0 0 1487.2,1152.5 Z" stroke="#000" stroke-width="1.2" fill="#fff"/>
<path d="M1487.2,1152.5 A15,6.8 180 0 0 1517.2,1152.5" stroke="#000" stroke-width="1.6" fill="none"/>
<path d="M1484.7,1130.5 L1484.7,1152.5 A17.5,7.9 180 0 0 1519.7,1152.5 L1519.7,1130.5 A17.5,7.9 180 0 0 1484.7,1130.5 Z" stroke="#000" stroke-width="1.2" fill="#fff"/>
<path d="M1484.7,1130.5 A17.5,7.9 180 0 0 1519.7,1130.5" stroke="#000" stroke-width="1.2" fill="none"/>
<ellipse cx="1502.2" cy="1130.5" rx="9" ry="4" stroke="#1a1a1a" stroke-width="0.9" fill="none"/>
<path d="M1487.2,1139.5 l0,11 M1491.5,1139.5 l0,11 M1495.8,1139.5 l0,11 M1500.1,1139.5 l0,11 M1504.4,1139.5 l0,11 M1508.7,1139.5 l0,11 M1513,1139.5 l0,11 M1517.3,1139.5 l0,11" stroke="#1a1a1a" stroke-width="1" fill="none"/>
<path d="M1380.8,1294.6 L1380.8,1310.6 A18,6.3 180 0 0 1416.8,1310.6 L1416.8,1294.6 A18,6.3 180 0 0 1380.8,1294.6 Z" stroke="#000" stroke-width="1.5" fill="#fff"/>
<path d="M1380.8,1294.6 A18,6.3 180 0 0 1416.8,1294.6" stroke="#000" stroke-width="1.6" fill="none"/>
<path d="M1377.3,1286.6 L1377.3,1294.6 A21.5,7.5 180 0 0 1420.3,1294.6 L1420.3,1286.6 A21.5,7.5 180 0 0 1377.3,1286.6 Z" stroke="#000" stroke-width="1.5" fill="#fff"/>
<path d="M1377.3,1286.6 A21.5,7.5 180 0 0 1420.3,1286.6" stroke="#000" stroke-width="1.6" fill="none"/>
<path d="M1379.3,1232.6 L1379.3,1286.6 A19.5,6.8 180 0 0 1418.3,1286.6 L1418.3,1232.6 A19.5,6.8 180 0 0 1379.3,1232.6 Z" stroke="#000" stroke-width="1.5" fill="#fff"/>
<path d="M1379.3,1232.6 A19.5,6.8 180 0 0 1418.3,1232.6" stroke="#000" stroke-width="1.6" fill="none"/>
<path d="M1407.5,1226.5 L1407.5,1280.5 M1391.9,1226.2 L1391.9,1280.2" stroke="#000" stroke-width="1.1" fill="none"/>
<path d="M1379.3,1222.6 L1379.3,1232.6 A19.5,6.8 180 0 0 1418.3,1232.6 L1418.3,1222.6 A19.5,6.8 180 0 0 1379.3,1222.6 Z" stroke="#000" stroke-width="1.5" fill="#fff"/>
<path d="M1379.3,1222.6 A19.5,6.8 180 0 0 1418.3,1222.6" stroke="#000" stroke-width="1.6" fill="none"/>
<path d="M1382.8,1212.6 L1382.8,1222.6 A16,5.6 180 0 0 1414.8,1222.6 L1414.8,1212.6 A16,5.6 180 0 0 1382.8,1212.6 Z" stroke="#000" stroke-width="1.5" fill="#fff"/>
<path d="M1382.8,1212.6 A16,5.6 180 0 0 1414.8,1212.6" stroke="#000" stroke-width="1.6" fill="none"/>
<path d="M1387.8,1198.6 L1387.8,1212.6 A11,3.8 180 0 0 1409.8,1212.6 L1409.8,1198.6 A11,3.8 180 0 0 1387.8,1198.6 Z" stroke="#000" stroke-width="1.5" fill="#fff"/>
<path d="M1387.8,1198.6 A11,3.8 180 0 0 1409.8,1198.6" stroke="#000" stroke-width="1.6" fill="none"/>
<path d="M1403.7,1195.1 L1403.7,1209.1 M1394.9,1195 L1394.9,1209" stroke="#000" stroke-width="1.1" fill="none"/>
<path d="M1393.3,1188.6 L1393.3,1198.6 A5.5,1.9 180 0 0 1404.3,1198.6 L1404.3,1188.6 A5.5,1.9 180 0 0 1393.3,1188.6 Z" stroke="#000" stroke-width="1.5" fill="#fff"/>
<path d="M1393.3,1188.6 A5.5,1.9 180 0 0 1404.3,1188.6" stroke="#000" stroke-width="1.5" fill="none"/>
<path d="M1404.3,1191.9 A5.5,1.9 180 0 0 1393.3,1191.9 M1404.3,1195.2 A5.5,1.9 180 0 0 1393.3,1195.2" stroke="#000" stroke-width="1.4" fill="none"/>
<path d="M1231.3,1295.6 L1260.8,1278.3 L1260.8,1256.2 L1297.8,1236.4 L1337.2,1258.6 L1375.4,1278.3 L1375.4,1310.3 L1418.5,1285.7 L1448,1302.9 L1448,1317.7 L1416,1337.4 L1416,1354.7 L1359.4,1386.7 L1344.6,1379.3 L1337.2,1344.8 L1287.9,1317.7 L1248.5,1330 L1233.7,1317.7 Z" stroke="#1a1a1a" stroke-width="1.2" fill="#fff"/>
<path d="M1268.2,1307.9 L1337.2,1344.8 L1416,1302.9 L1416,1337.4" stroke="#1a1a1a" stroke-width="1.2" fill="none"/>
<path d="M1283,1299.3 L1297.8,1290.6 L1327.3,1306.6 L1310.1,1316.5 Z" stroke="#1a1a1a" stroke-width="0.9" fill="none"/>
<path d="M1264.8,1240.8 L1264.8,1267.8 A17,7.1 180 0 0 1298.8,1267.8 L1298.8,1240.8 A17,7.1 180 0 0 1264.8,1240.8 Z" stroke="#000" stroke-width="1.5" fill="#fff"/>
<path d="M1264.8,1240.8 A17,7.1 180 0 0 1298.8,1240.8" stroke="#000" stroke-width="1.6" fill="none"/>
<path d="M1260.8,1236.8 L1260.8,1240.8 A21,8.8 180 0 0 1302.8,1240.8 L1302.8,1236.8 A21,8.8 180 0 0 1260.8,1236.8 Z" stroke="#000" stroke-width="1.5" fill="#fff"/>
<path d="M1260.8,1236.8 A21,8.8 180 0 0 1302.8,1236.8" stroke="#000" stroke-width="1.6" fill="none"/>
<path d="M1263.3,1227.8 L1263.3,1236.8 A18.5,7.8 180 0 0 1300.3,1236.8 L1300.3,1227.8 A18.5,7.8 180 0 0 1263.3,1227.8 Z" stroke="#000" stroke-width="1.5" fill="#fff"/>
<path d="M1263.3,1227.8 A18.5,7.8 180 0 0 1300.3,1227.8" stroke="#000" stroke-width="1.5" fill="none"/>
<path d="M1290.1,1220.9 L1290.1,1229.9 M1275.3,1220.5 L1275.3,1229.5" stroke="#000" stroke-width="1.1" fill="none"/>
<ellipse cx="1281.8" cy="1228.8" rx="11" ry="4.2" stroke="#1a1a1a" stroke-width="0.9" fill="none"/>
<path d="M1301.7,1261.8 L1301.7,1288.8 A17,7.1 180 0 0 1335.7,1288.8 L1335.7,1261.8 A17,7.1 180 0 0 1301.7,1261.8 Z" stroke="#000" stroke-width="1.5" fill="#fff"/>
<path d="M1301.7,1261.8 A17,7.1 180 0 0 1335.7,1261.8" stroke="#000" stroke-width="1.6" fill="none"/>
<path d="M1297.7,1257.8 L1297.7,1261.8 A21,8.8 180 0 0 1339.7,1261.8 L1339.7,1257.8 A21,8.8 180 0 0 1297.7,1257.8 Z" stroke="#000" stroke-width="1.5" fill="#fff"/>
<path d="M1297.7,1257.8 A21,8.8 180 0 0 1339.7,1257.8" stroke="#000" stroke-width="1.6" fill="none"/>
<path d="M1300.2,1248.8 L1300.2,1257.8 A18.5,7.8 180 0 0 1337.2,1257.8 L1337.2,1248.8 A18.5,7.8 180 0 0 1300.2,1248.8 Z" stroke="#000" stroke-width="1.5" fill="#fff"/>
<path d="M1300.2,1248.8 A18.5,7.8 180 0 0 1337.2,1248.8" stroke="#000" stroke-width="1.5" fill="none"/>
<path d="M1327,1241.8 L1327,1250.8 M1312.2,1241.5 L1312.2,1250.5" stroke="#000" stroke-width="1.1" fill="none"/>
<ellipse cx="1318.7" cy="1249.8" rx="11" ry="4.2" stroke="#1a1a1a" stroke-width="0.9" fill="none"/>
<path d="M1338.7,1282.7 L1338.7,1309.7 A17,7.1 180 0 0 1372.7,1309.7 L1372.7,1282.7 A17,7.1 180 0 0 1338.7,1282.7 Z" stroke="#000" stroke-width="1.5" fill="#fff"/>
<path d="M1338.7,1282.7 A17,7.1 180 0 0 1372.7,1282.7" stroke="#000" stroke-width="1.6" fill="none"/>
<path d="M1334.7,1278.7 L1334.7,1282.7 A21,8.8 180 0 0 1376.7,1282.7 L1376.7,1278.7 A21,8.8 180 0 0 1334.7,1278.7 Z" stroke="#000" stroke-width="1.5" fill="#fff"/>
<path d="M1334.7,1278.7 A21,8.8 180 0 0 1376.7,1278.7" stroke="#000" stroke-width="1.6" fill="none"/>
<path d="M1337.2,1269.7 L1337.2,1278.7 A18.5,7.8 180 0 0 1374.2,1278.7 L1374.2,1269.7 A18.5,7.8 180 0 0 1337.2,1269.7 Z" stroke="#000" stroke-width="1.5" fill="#fff"/>
<path d="M1337.2,1269.7 A18.5,7.8 180 0 0 1374.2,1269.7" stroke="#000" stroke-width="1.5" fill="none"/>
<path d="M1364,1262.8 L1364,1271.8 M1349.2,1262.4 L1349.2,1271.4" stroke="#000" stroke-width="1.1" fill="none"/>
<ellipse cx="1355.7" cy="1270.7" rx="11" ry="4.2" stroke="#1a1a1a" stroke-width="0.9" fill="none"/>
<path d="M1352.8,1320.6 L1352.8,1328.6 A9,3.1 180 0 0 1370.8,1328.6 L1370.8,1320.6 A9,3.1 180 0 0 1352.8,1320.6 Z" stroke="#000" stroke-width="1.4" fill="#fff"/>
<path d="M1352.8,1320.6 A9,3.1 180 0 0 1370.8,1320.6" stroke="#000" stroke-width="1.6" fill="none"/>
<path d="M1356.3,1300.6 L1356.3,1320.6 A5.5,1.9 180 0 0 1367.3,1320.6 L1367.3,1300.6 A5.5,1.9 180 0 0 1356.3,1300.6 Z" stroke="#000" stroke-width="1.4" fill="#fff"/>
<path d="M1356.3,1300.6 A5.5,1.9 180 0 0 1367.3,1300.6" stroke="#000" stroke-width="1.6" fill="none"/>
<path d="M1367.3,1304 A5.5,1.9 180 0 0 1356.3,1304 M1367.3,1307.3 A5.5,1.9 180 0 0 1356.3,1307.3 M1367.3,1310.6 A5.5,1.9 180 0 0 1356.3,1310.6 M1367.3,1314 A5.5,1.9 180 0 0 1356.3,1314 M1367.3,1317.3 A5.5,1.9 180 0 0 1356.3,1317.3" stroke="#000" stroke-width="1.4" fill="none"/>
<path d="M1354.8,1290.6 L1354.8,1300.6 A7,2.4 180 0 0 1368.8,1300.6 L1368.8,1290.6 A7,2.4 180 0 0 1354.8,1290.6 Z" stroke="#000" stroke-width="1.4" fill="#fff"/>
<path d="M1354.8,1290.6 A7,2.4 180 0 0 1368.8,1290.6" stroke="#000" stroke-width="1.4" fill="none"/>
<path d="M1236.5,1326.7 L1263,1340.8 A16,12 118.1 0 0 1278.1,1312.6 L1251.6,1298.5 A16,12 118.1 0 0 1236.5,1326.7 Z" stroke="#000" stroke-width="1.4" fill="#fff"/>
<path d="M1236.5,1326.7 A16,12 118.1 0 0 1251.6,1298.5" stroke="#000" stroke-width="1.4" fill="none"/>
<path d="M1238.9,1322.3 A11,8.2 118.1 0 0 1249.2,1302.9 A11,8.2 118.1 0 0 1238.9,1322.3 Z" stroke="#000" stroke-width="1.5" fill="#fff"/>
<path d="M1243.2,1321.6 A8.8,6.6 118.1 0 0 1251.1,1306.8" stroke="#000" stroke-width="1.1" fill="none"/>
<path d="M1350.8,1364 L1359.6,1359.4 A21,12.6 62.2 0 0 1340,1322.2 L1331.1,1326.9 A21,12.6 62.2 0 0 1350.8,1364 Z" stroke="#000" stroke-width="1.6" fill="#fff"/>
<path d="M1350.8,1364 A21,12.6 62.2 0 0 1331.1,1326.9" stroke="#000" stroke-width="1.6" fill="none"/>
<path d="M1326.6,1342.4 L1335.4,1337.7 M1333.9,1357.5 L1342.8,1352.8" stroke="#000" stroke-width="1.1" fill="none"/>
<path d="M1328.5,1369 L1348,1358.7 A15,9 62.2 0 0 1333.9,1332.2 L1314.5,1342.5 A15,9 62.2 0 0 1328.5,1369 Z" stroke="#000" stroke-width="1.6" fill="#fff"/>
<path d="M1328.5,1369 A15,9 62.2 0 0 1314.5,1342.5" stroke="#000" stroke-width="1.6" fill="none"/>
<path d="M1317.3,1341 A15,9 62.2 0 0 1331.3,1367.5 M1320,1339.5 A15,9 62.2 0 0 1334.1,1366.1 M1322.8,1338.1 A15,9 62.2 0 0 1336.8,1364.6 M1325.6,1336.6 A15,9 62.2 0 0 1339.6,1363.1 M1328.4,1335.1 A15,9 62.2 0 0 1342.4,1361.7 M1331.2,1333.7 A15,9 62.2 0 0 1345.2,1360.2" stroke="#000" stroke-width="1.4" fill="none"/>
<path d="M1325.7,1363.7 A9,5.4 62.2 0 0 1317.3,1347.8 A9,5.4 62.2 0 0 1325.7,1363.7 Z" stroke="#000" stroke-width="1.5" fill="#fff"/>
<path d="M1327.2,1360.5 A7.2,4.3 62.2 0 0 1320.8,1348.4" stroke="#000" stroke-width="1.1" fill="none"/>
<path d="M1357.3,1385.8 L1419.2,1353.1 A11.5,8 62.2 0 0 1408.5,1332.7 L1346.6,1365.4 A11.5,8 62.2 0 0 1357.3,1385.8 Z" stroke="#000" stroke-width="1.4" fill="#fff"/>
<path d="M1357.3,1385.8 A11.5,8 62.2 0 0 1346.6,1365.4" stroke="#000" stroke-width="1.4" fill="none"/>
<path d="M1355.5,1382.2 A7.5,5.2 62.2 0 0 1348.5,1369 A7.5,5.2 62.2 0 0 1355.5,1382.2 Z" stroke="#000" stroke-width="1.5" fill="#fff"/>
<path d="M1357.1,1379.4 A6,4.2 62.2 0 0 1351.7,1369.3" stroke="#000" stroke-width="1.1" fill="none"/>
<path d="M1450.5,1309.1 L1450.5,1317.7 L1475.1,1331.3" stroke="#1a1a1a" stroke-width="1" fill="none"/>
<path d="M1449.3,1270.9 L1472.7,1261.1 L1472.7,1268.5 L1452.9,1278.3" stroke="#1a1a1a" stroke-width="1" fill="none"/>
<path d="M1449.3,1302.9 L1472.7,1293.1 L1472.7,1300.5 L1452.9,1310.3" stroke="#1a1a1a" stroke-width="1" fill="none"/>
<path d="M1363.8,1157.6 L1363.8,1290.6" stroke="#1a1a1a" stroke-width="1" fill="none"/>
<path d="M1318.7,1216.7 L1318.7,1246.3" stroke="#1a1a1a" stroke-width="1" fill="none"/>
</g>
<g id="coil" stroke="#1a1a1a" stroke-width="1.2">
<path d="M1489.2,1419.7 A210,108 0 0 1 1909.2,1419.7 L1909.2,1680 C1909.2,1740 1869.2,1800 1829.2,1830 L1579.2,1830 C1529.2,1800 1489.2,1740 1489.2,1680 Z" stroke="none" stroke-width="1.2" fill="#fff"/>
<ellipse cx="1699.2" cy="1419.7" rx="210" ry="108" transform="rotate(-1.2 1699.2 1419.7)" stroke="#1a1a1a" stroke-width="1.2" fill="#fff"/>
<ellipse cx="1699.7" cy="1411.7" rx="184" ry="90" transform="rotate(-1.2 1699.7 1411.7)" stroke="#1a1a1a" stroke-width="1.2" fill="#fff"/>
<ellipse cx="1699.8" cy="1425" rx="169" ry="75" transform="rotate(-1.2 1699.8 1425)" stroke="#1a1a1a" stroke-width="1.2" fill="#fff"/>
<clipPath id="cin"><ellipse cx="1700" cy="1438.8" rx="142.5" ry="62.8"/></clipPath>
<ellipse cx="1700" cy="1438.8" rx="142.5" ry="62.8" stroke="#1a1a1a" stroke-width="1.2" fill="#fff"/>
<path d="M1557.5,1465.3 A142.5,62.8 0 0 1 1842.5,1465.3 M1557.5,1491.8 A142.5,62.8 0 0 1 1842.5,1491.8 M1557.5,1518.3 A142.5,62.8 0 0 1 1842.5,1518.3 M1557.5,1544.8 A142.5,62.8 0 0 1 1842.5,1544.8" stroke="#1a1a1a" stroke-width="1.2" clip-path="url(#cin)"/>
<path d="M1523,1385 L1532,1382 L1533,1438 Q1537,1470 1556,1495 M1523,1385 L1522,1455 Q1527,1480 1545,1500" stroke="#1a1a1a" stroke-width="1.2" fill="none"/>
<path d="M1822,1352 L1830,1348 L1838,1353 L1838,1366" stroke="#1a1a1a" stroke-width="1.2" fill="none"/>
<path d="M1868,1425 Q1872,1450 1850,1475 M1883,1412 Q1888,1445 1862,1478" stroke="#1a1a1a" stroke-width="1.2" fill="none"/>
<path d="M1909.2,1419.7 A210,108 0 0 1 1489.2,1419.7 M1909.2,1446 A210,108 0 0 1 1489.2,1446 M1909.2,1472.4 A210,108 0 0 1 1489.2,1472.4 M1909.2,1498.8 A210,108 0 0 1 1489.2,1498.8 M1909.2,1525.1 A210,108 0 0 1 1489.2,1525.1 M1909.2,1551.5 A210,108 0 0 1 1489.2,1551.5 M1909.2,1577.8 A210,108 0 0 1 1489.2,1577.8 M1909.2,1604.2 A210,108 0 0 1 1489.2,1604.2 M1909.2,1630.5 A210,108 0 0 1 1489.2,1630.5 M1907.2,1671.9 A210,108 0 0 1 1491.2,1671.9 M1896.5,1720.1 A210,108 0 0 1 1501.9,1720.1 M1875.3,1768.4 A210,108 0 0 1 1523.1,1768.4 M1834.2,1818.6 A210,108 0 0 1 1594.2,1829.4" stroke="#1a1a1a" stroke-width="1.2" fill="none"/>
<path d="M1489.2,1419.7 L1489.2,1680 C1489.2,1730 1524.2,1780 1574.2,1806" stroke="#1a1a1a" stroke-width="1.2" fill="none"/>
<path d="M1909.2,1680 C1908.5,1688.3 1907.7,1715 1905,1730 C1902.3,1745 1898.3,1757 1893,1770 C1887.7,1783 1879.5,1797.2 1873,1808 C1866.5,1818.8 1858.3,1826.4 1854,1834.6 C1849.7,1842.8 1848.2,1853.3 1847,1857 L1821.8,1857 L1826.7,1829 L1838,1808 L1846,1795 Z" stroke="#fff" stroke-width="0.1" fill="#fff"/>
<path d="M1909.2,1419.7 C1909.2,1463.1 1909.9,1628.3 1909.2,1680 C1908.5,1731.7 1907.7,1715 1905,1730 C1902.3,1745 1898.3,1757 1893,1770 C1887.7,1783 1879.5,1797.2 1873,1808 C1866.5,1818.8 1858.3,1826.4 1854,1834.6 C1849.7,1842.8 1848.2,1853.3 1847,1857" stroke="#1a1a1a" stroke-width="1.2" fill="none"/>
<path d="M1846,1795 C1844.7,1797.2 1841.2,1802.3 1838,1808 C1834.8,1813.7 1829.4,1820.8 1826.7,1829 C1824,1837.2 1822.6,1852.3 1821.8,1857" stroke="#1a1a1a" stroke-width="1.2" fill="none"/>
<path d="M1846,1795 Q1880,1770 1898,1720" stroke="#1a1a1a" stroke-width="1.2" fill="none"/>
<path d="M1583,1812 Q1700,1862 1800,1832" stroke="#1a1a1a" stroke-width="1.2" fill="none"/>
<path d="M1477,1407 L1477,1468 A7.5,3 0 0 0 1492,1468 L1492,1407" stroke="#1a1a1a" stroke-width="1.2" fill="#fff"/>
<ellipse cx="1484.5" cy="1407" rx="7.5" ry="4" stroke="#1a1a1a" stroke-width="1.2" fill="#fff"/>
<path d="M1758.5,1538 L1758.5,1598 A7.5,3 0 0 0 1773.5,1598 L1773.5,1538" stroke="#1a1a1a" stroke-width="1.2" fill="#fff"/>
<ellipse cx="1766" cy="1538" rx="7.5" ry="4" stroke="#1a1a1a" stroke-width="1.2" fill="#fff"/>
<path d="M1573,1803 L1573,1812 L1588,1838 L1591,1838" stroke="#1a1a1a" stroke-width="1.2" fill="none"/>
<path d="M1780,1808 L1780,1832 L1787,1836 L1798,1831 L1798,1806" stroke="#1a1a1a" stroke-width="1.2" fill="#fff"/>
<ellipse cx="1834" cy="1861" rx="24.6" ry="11" stroke="#1a1a1a" stroke-width="1.2" fill="#fff"/>
<path d="M1821.8,1857 A12.5,5 0 0 0 1847,1857" stroke="#1a1a1a" stroke-width="1.2" fill="none"/>
<path d="M1821.3,1870 L1821.3,1943 A12.8,4 0 0 0 1846.900,1943 L1846.9,1870" stroke="#1a1a1a" stroke-width="1.2" fill="#fff"/>
<path d="M1821.3,1898 A12.8,4 0 0 0 1846.9,1898 M1821.3,1904 A12.8,4 0 0 0 1846.9,1904 M1821.3,1910 A12.8,4 0 0 0 1846.9,1910 M1821.3,1916 A12.8,4 0 0 0 1846.9,1916 M1821.3,1922 A12.8,4 0 0 0 1846.9,1922 M1821.3,1928 A12.8,4 0 0 0 1846.9,1928 M1821.3,1934 A12.8,4 0 0 0 1846.9,1934 M1821.3,1940 A12.8,4 0 0 0 1846.9,1940" stroke="#1a1a1a" stroke-width="1" fill="none"/>
</g>
<g id="hoses">
<path d="M804.6,815.5 L819.2,850.3 Q829.2,874.3 817.1,897.3 L766.3,993.5 Q754.2,1016.5 776.7,1029.6 L965.4,1139.1 Q987.9,1152.2 971.5,1172.4 L942.4,1208.3 Q926,1228.5 948.1,1242.2 L977.8,1260.5" stroke="#000" stroke-width="9.4" fill="none" stroke-linecap="butt" /><path d="M804.6,815.5 L819.2,850.3 Q829.2,874.3 817.1,897.3 L766.3,993.5 Q754.2,1016.5 776.7,1029.6 L965.4,1139.1 Q987.9,1152.2 971.5,1172.4 L942.4,1208.3 Q926,1228.5 948.1,1242.2 L977.8,1260.5" stroke="#fff" stroke-width="4.2" fill="none" stroke-linecap="butt" />
<ellipse cx="804.8" cy="815.6" rx="4.3" ry="2.6" transform="rotate(-25 804.8 815.6)" stroke="#000" stroke-width="2.2" fill="#fff"/>
<ellipse cx="977.6" cy="1260.4" rx="2.6" ry="4.4" transform="rotate(-30 977.6 1260.4)" stroke="#000" stroke-width="2.2" fill="#fff"/>
<path d="M1050,1257.5 C1058.3,1252.9 1082.4,1240.4 1100,1230 C1117.6,1219.6 1140.4,1205 1155.6,1195 C1170.8,1185 1179.9,1178.8 1191,1170 C1202.1,1161.2 1212.2,1151.3 1222,1142 C1231.8,1132.7 1241.7,1123.3 1250,1114 C1258.3,1104.7 1265.4,1095.5 1272,1086 C1278.6,1076.5 1283.1,1065.5 1289.4,1057 C1295.7,1048.5 1302.2,1040.7 1310,1035 C1317.8,1029.3 1329,1024.5 1336,1023 C1343,1021.5 1348,1023.2 1352,1026 C1356,1028.8 1358.3,1034.3 1360,1040 C1361.7,1045.7 1361.7,1040.4 1362,1060 C1362.3,1079.6 1362,1141.2 1362,1157.4" stroke="#000" stroke-width="21" fill="none" stroke-linecap="butt" /><path d="M1050,1257.5 C1058.3,1252.9 1082.4,1240.4 1100,1230 C1117.6,1219.6 1140.4,1205 1155.6,1195 C1170.8,1185 1179.9,1178.8 1191,1170 C1202.1,1161.2 1212.2,1151.3 1222,1142 C1231.8,1132.7 1241.7,1123.3 1250,1114 C1258.3,1104.7 1265.4,1095.5 1272,1086 C1278.6,1076.5 1283.1,1065.5 1289.4,1057 C1295.7,1048.5 1302.2,1040.7 1310,1035 C1317.8,1029.3 1329,1024.5 1336,1023 C1343,1021.5 1348,1023.2 1352,1026 C1356,1028.8 1358.3,1034.3 1360,1040 C1361.7,1045.7 1361.7,1040.4 1362,1060 C1362.3,1079.6 1362,1141.2 1362,1157.4" stroke="#fff" stroke-width="14.6" fill="none" stroke-linecap="butt" />
<path d="M1351.5,1157 Q1362,1163 1372.500,1157" stroke="#000" stroke-width="3.2" fill="none"/>
<path d="M1046,1248.5 Q1036,1254 1039,1261.500 Q1042,1267 1047.500,1266 Q1053,1263 1055,1266.500" stroke="#000" stroke-width="3" fill="#fff"/>
<path d="M1046,1249.5 Q1054,1254 1054,1264" stroke="#000" stroke-width="1.2" fill="none"/>
<path d="M1028.9,1278.9 L1042,1271.8" stroke="#000" stroke-width="3.2"/>
<path d="M995.4,1298.2 C992,1300.4 979.9,1304.1 975,1311.4 C970.1,1318.7 967.2,1332.1 966,1341.9 C964.8,1351.7 964.7,1358.1 967.9,1370.3 C971.1,1382.5 979.3,1397.7 985.2,1415 C991.1,1432.3 999.3,1457.4 1003.5,1474 C1007.7,1490.6 1009.9,1501.9 1010.6,1514.6 C1011.4,1527.3 1010.4,1539.9 1008,1550 C1005.6,1560.1 1001.5,1569 996,1575 C990.5,1581 984.5,1584.5 975,1586 C965.5,1587.5 949.8,1586.7 939,1584 C928.2,1581.3 919.3,1575.2 910,1570 C900.7,1564.8 887.8,1555.4 883.3,1552.5" stroke="#000" stroke-width="3.4" fill="none"/>
<path d="M576.5,1374.7 C571.6,1372.2 554.8,1362.1 547,1359.5 C539.2,1356.9 534.5,1357.6 530,1359 C525.5,1360.4 521.9,1363.7 520,1368 C518.1,1372.3 518.4,1377.8 518.5,1385 C518.6,1392.2 518.4,1399.1 520.6,1411.3 C522.8,1423.5 529.9,1450.2 531.8,1458" stroke="#000" stroke-width="3.4" fill="none"/>
<path d="M1073.7,1575 C1073.8,1579.9 1073.4,1592.7 1074.3,1604.4 C1075.2,1616.1 1075,1630.2 1079,1645 C1083,1659.8 1087.8,1677.8 1098.5,1693.3 C1109.2,1708.8 1126.5,1725.8 1142.9,1737.7 C1159.3,1749.6 1174.8,1757.6 1197,1764.8 C1219.2,1772 1251.3,1777.7 1275.9,1781 C1300.5,1784.3 1321,1781.5 1344.8,1784.5 C1368.6,1787.5 1394.1,1792.2 1418.7,1799.2 C1443.3,1806.2 1472.4,1817.3 1492.6,1826.3 C1512.8,1835.3 1523.6,1843.1 1540,1853 C1556.4,1862.9 1574.2,1874.8 1591.1,1885.5 C1608,1896.2 1626.2,1905.8 1641.3,1917 C1656.4,1928.2 1671.3,1940 1681.9,1953 C1692.5,1966 1699.2,1978.8 1705,1995 C1710.8,2011.2 1714.2,2032.1 1716.7,2050 C1719.2,2067.9 1719.3,2093.6 1719.8,2102.3" stroke="#000" stroke-width="3.4" fill="none"/>
<path d="M1242.3,1564.8 C1242.3,1578 1240.9,1622.6 1242.4,1644 C1243.9,1665.4 1245.6,1676.9 1251.2,1693.3 C1256.8,1709.7 1266.9,1728.2 1275.9,1742.6 C1284.9,1757 1293.9,1768.8 1305.4,1779.5 C1316.9,1790.2 1330,1798.8 1344.8,1806.6 C1359.6,1814.4 1377.7,1820.5 1394.1,1826.3 C1410.5,1832 1422.8,1832.9 1443.3,1841.1 C1463.8,1849.3 1492.6,1862.4 1517.2,1875.6 C1541.8,1888.8 1570.6,1906 1591.1,1920 C1611.6,1934 1627.6,1945.1 1640.4,1959.3 C1653.2,1973.5 1661.4,1989.9 1668,2005 C1674.6,2020.1 1677.1,2033.3 1679.8,2050 C1682.5,2066.7 1683.3,2095.8 1684,2105" stroke="#000" stroke-width="3.4" fill="none"/>
<path d="M1719.8,2110 L1720.5,2240" stroke="#000" stroke-width="3.4" fill="none" stroke-dasharray="42 9" stroke-linecap="butt"/>
<path d="M1684,2112 L1684.8,2240" stroke="#000" stroke-width="3.4" fill="none" stroke-dasharray="42 9" stroke-linecap="butt"/>
<path d="M1684.8,2240 C1685.2,2256.4 1685.8,2316.5 1687.2,2338.5 C1688.6,2360.5 1690.3,2362.2 1693,2372 C1695.7,2381.8 1698.9,2389.1 1703.2,2397.6 C1707.5,2406.1 1712.8,2415.2 1719,2423 C1725.2,2430.8 1722.3,2431.4 1740.2,2444.4 C1758.1,2457.4 1808.4,2488.8 1826.4,2501.1 C1844.4,2513.4 1842.7,2512.2 1848,2518 C1853.3,2523.8 1856.4,2529.9 1858.4,2535.6 C1860.4,2541.3 1860.9,2546.6 1860,2552 C1859.1,2557.4 1856.7,2563.5 1853,2568 C1849.3,2572.5 1843.8,2576.2 1838,2579 C1832.2,2581.8 1825.2,2583.7 1818,2584.5 C1810.8,2585.3 1802.7,2585.4 1795,2584 C1787.3,2582.6 1778.5,2578.9 1772,2576 C1765.5,2573.1 1758.8,2567.9 1756.2,2566.3" stroke="#000" stroke-width="3.4" fill="none"/>
<path d="M1720.5,2240 C1720.7,2252.3 1720.6,2296.7 1721.7,2313.9 C1722.8,2331.1 1724.3,2334 1727,2343 C1729.7,2352 1733.5,2359.9 1737.7,2368.1 C1741.9,2376.3 1746.7,2384.6 1752,2392 C1757.3,2399.4 1761.7,2405.2 1769.7,2412.4 C1777.7,2419.6 1788.5,2426.1 1800,2435 C1811.5,2443.9 1825.4,2456.8 1838.7,2466 C1852,2475.2 1863.6,2482.8 1880,2490 C1896.4,2497.2 1921.5,2505.1 1937.3,2508.9 C1953.1,2512.7 1962.5,2512.4 1975,2513 C1987.5,2513.6 1999.7,2513.4 2012.2,2512.6 C2024.7,2511.8 2037.5,2510.2 2050,2508 C2062.5,2505.8 2074.6,2503.2 2087.1,2499.5 C2099.6,2495.8 2112.5,2491 2125,2486 C2137.5,2481 2150.3,2475.5 2162,2469.5 C2173.7,2463.5 2184.4,2456.9 2195,2450 C2205.6,2443.1 2220.6,2431.9 2225.7,2428.3" stroke="#000" stroke-width="3.4" fill="none"/>
<path d="M1833.7,2321.7 C1833.7,2328.1 1833.4,2346 1833.5,2360 C1833.6,2374 1833.2,2394.2 1834.3,2405.9 C1835.4,2417.6 1837.2,2423.2 1840,2430 C1842.8,2436.8 1845.8,2441.7 1851.1,2447 C1856.4,2452.3 1863.9,2458.1 1872,2462 C1880.1,2465.9 1891,2469.2 1899.8,2470.5 C1908.6,2471.8 1916.2,2472.4 1925,2470 C1933.8,2467.6 1944.1,2460.5 1952.4,2456 C1960.7,2451.5 1967.2,2447.5 1975,2443 C1982.8,2438.5 1995.2,2431.2 1999.2,2428.8" stroke="#000" stroke-width="3.4" fill="none"/>
</g>
<g id="parts">
<path d="M720,706 L730,727.8 A29,23.2 155.2 0 0 782.7,703.5 L772.6,681.7 A29,23.2 155.2 0 0 720,706 Z" stroke="#000" stroke-width="2.8" fill="#fff"/>
<path d="M720,706 A29,23.2 155.2 0 0 772.6,681.7" stroke="#000" stroke-width="1.6" fill="none"/>
<path d="M712,704.2 L714.1,708.7 A35.5,28.4 155.2 0 0 778.5,679 L776.4,674.4 A35.5,28.4 155.2 0 0 712,704.2 Z" stroke="#000" stroke-width="2.8" fill="#fff"/>
<path d="M712,704.2 A35.5,28.4 155.2 0 0 776.4,674.4" stroke="#000" stroke-width="2.8" fill="none"/>
<ellipse cx="744.5" cy="689.5" rx="30.5" ry="24.5" transform="rotate(-25 744.5 689.5)" stroke="#111" stroke-width="1.1" fill="none"/>
<ellipse cx="744.5" cy="689.5" rx="25" ry="19.5" transform="rotate(-25 744.5 689.5)" stroke="#111" stroke-width="1" fill="none"/>
<path d="M724,693 L757,684 L758,688 L725,695 Z" stroke="#000" stroke-width="1.1" fill="#fff"/>
<path d="M720.4,693.4 L725.2,692.6" stroke="#111" stroke-width="1" fill="none"/>
<path d="M723.6,682.8 L727.8,684.2" stroke="#111" stroke-width="1" fill="none"/>
<path d="M732.4,673.9 L734.9,677.1" stroke="#111" stroke-width="1" fill="none"/>
<path d="M744.5,669.3 L744.5,673.4" stroke="#111" stroke-width="1" fill="none"/>
<path d="M756.6,670 L754.2,674" stroke="#111" stroke-width="1" fill="none"/>
<path d="M765.4,676 L761.2,678.7" stroke="#111" stroke-width="1" fill="none"/>
<path d="M768,757.7 L773.8,769.4 A8,4.4 153.2 0 0 788.1,762.1 L782.2,750.5 A8,4.4 153.2 0 0 768,757.7 Z" stroke="#000" stroke-width="2.5" fill="#fff"/>
<path d="M768,757.7 A8,4.4 153.2 0 0 782.2,750.5" stroke="#000" stroke-width="1.6" fill="none"/>
<path d="M783.7,753.4 A8,4.4 153.2 0 0 769.4,760.6 M785.2,756.3 A8,4.4 153.2 0 0 770.9,763.5 M786.6,759.2 A8,4.4 153.2 0 0 772.4,766.5" stroke="#000" stroke-width="1.4" fill="none"/>
<path d="M762.1,751.7 L765.7,758.9 A10.5,5.8 153.2 0 0 784.5,749.4 L780.9,742.3 A10.5,5.8 153.2 0 0 762.1,751.7 Z" stroke="#000" stroke-width="2.5" fill="#fff"/>
<path d="M762.1,751.7 A10.5,5.8 153.2 0 0 780.9,742.3" stroke="#000" stroke-width="2.5" fill="none"/>
<path d="M773.4,740.3 L777,747.4 M765.8,743.8 L769.4,751" stroke="#000" stroke-width="1.1" fill="none"/>
<path d="M765.7,749.9 A6.5,3.6 153.2 0 0 777.3,744.1 A6.5,3.6 153.2 0 0 765.7,749.9 Z" stroke="#000" stroke-width="1.5" fill="#fff"/>
<path d="M768.2,751.3 A5.2,2.9 153.2 0 0 777,746.9" stroke="#000" stroke-width="1.1" fill="none"/>
<path d="M786.6,797.9 L791.1,806.8 A8,4.4 153.2 0 0 805.4,799.6 L800.9,790.7 A8,4.4 153.2 0 0 786.6,797.9 Z" stroke="#000" stroke-width="2.5" fill="#fff"/>
<path d="M786.6,797.9 A8,4.4 153.2 0 0 800.9,790.7" stroke="#000" stroke-width="1.6" fill="none"/>
<path d="M802.4,793.6 A8,4.4 153.2 0 0 788.1,800.9 M803.9,796.6 A8,4.4 153.2 0 0 789.6,803.8" stroke="#000" stroke-width="1.4" fill="none"/>
<path d="M778.9,789.4 L783.9,799.2 A11,6.1 153.2 0 0 803.5,789.3 L798.6,779.5 A11,6.1 153.2 0 0 778.9,789.4 Z" stroke="#000" stroke-width="2.5" fill="#fff"/>
<path d="M778.9,789.4 A11,6.1 153.2 0 0 798.6,779.5" stroke="#000" stroke-width="1.6" fill="none"/>
<path d="M790.7,777.4 L795.7,787.2 M782.8,781.1 L787.7,791" stroke="#000" stroke-width="1.1" fill="none"/>
<path d="M779.4,783.6 L781.6,788.1 A8,4.4 153.2 0 0 795.9,780.9 L793.6,776.4 A8,4.4 153.2 0 0 779.4,783.6 Z" stroke="#000" stroke-width="2.5" fill="#fff"/>
<path d="M779.4,783.6 A8,4.4 153.2 0 0 793.6,776.4" stroke="#000" stroke-width="2.5" fill="none"/>
<path d="M782,782.3 A5,2.8 153.2 0 0 791,777.7 A5,2.8 153.2 0 0 782,782.3 Z" stroke="#000" stroke-width="1.5" fill="#fff"/>
<path d="M784.1,783.6 A4,2.2 153.2 0 0 790.9,780.2" stroke="#000" stroke-width="1.1" fill="none"/>
<path d="M1002.3,1263.5 L993.7,1258.4 A11,5.5 -59.8 0 0 982.6,1277.5 L991.3,1282.5 A11,5.5 -59.8 0 0 1002.3,1263.5 Z" stroke="#000" stroke-width="2.5" fill="#fff"/>
<path d="M1002.3,1263.5 A11,5.5 -59.8 0 0 991.3,1282.5" stroke="#000" stroke-width="1.6" fill="none"/>
<path d="M998.6,1279.7 L989.9,1274.7 M1003.2,1272.2 L994.6,1267.2" stroke="#000" stroke-width="1.1" fill="none"/>
<path d="M1006.5,1268.2 L1001.3,1265.2 A9,4.5 -59.8 0 0 992.3,1280.8 L997.5,1283.8 A9,4.5 -59.8 0 0 1006.5,1268.2 Z" stroke="#000" stroke-width="2.5" fill="#fff"/>
<path d="M1006.5,1268.2 A9,4.5 -59.8 0 0 997.5,1283.8" stroke="#000" stroke-width="2.5" fill="none"/>
<path d="M1000,1266 L1012,1268 Q1025,1272 1025.5,1284 L1024,1304 Q1015,1309 1006.500,1304 L1006,1292 Q1004,1286 994,1284 Z" stroke="#000" stroke-width="2.6" fill="#fff"/>
<path d="M1006.5,1296 Q1015,1301 1024.500,1296" stroke="#111" stroke-width="1.1" fill="none"/>
<path d="M1010,1269 Q1004,1276 1006,1288" stroke="#111" stroke-width="1.1" fill="none"/>
<path d="M1014.7,1309.4 L1014.7,1325.6" stroke="#111" stroke-width="1.3" fill="none"/>
<path d="M900,1359.7 L887.6,1353.1 A14.5,7.2 -61.9 0 0 873.9,1378.7 L886.3,1385.3 A14.5,7.2 -61.9 0 0 900,1359.7 Z" stroke="#000" stroke-width="2.5" fill="#fff"/>
<path d="M900,1359.7 A14.5,7.2 -61.9 0 0 886.3,1385.3" stroke="#000" stroke-width="1.6" fill="none"/>
<path d="M895.8,1381.3 L883.4,1374.7 M901.5,1371.2 L889.2,1364.6" stroke="#000" stroke-width="1.1" fill="none"/>
<path d="M905.4,1366.6 L898.3,1362.8 A11,5.5 -61.9 0 0 887.9,1382.2 L895,1386 A11,5.5 -61.9 0 0 905.4,1366.6 Z" stroke="#000" stroke-width="2.5" fill="#fff"/>
<path d="M905.4,1366.6 A11,5.5 -61.9 0 0 895,1386" stroke="#000" stroke-width="1.6" fill="none"/>
<path d="M912.5,1374.4 L903.7,1369.7 A7.5,3.8 -61.9 0 0 896.6,1382.9 L905.5,1387.6 A7.5,3.8 -61.9 0 0 912.5,1374.4 Z" stroke="#000" stroke-width="2.5" fill="#fff"/>
<path d="M912.5,1374.4 A7.5,3.8 -61.9 0 0 905.5,1387.6" stroke="#000" stroke-width="2.5" fill="none"/>
<path d="M902.5,1386 A7.5,3.8 -61.9 0 0 909.6,1372.8 M899.6,1384.5 A7.5,3.8 -61.9 0 0 906.7,1371.2" stroke="#000" stroke-width="1.4" fill="none"/>
<path d="M816.6,1317.7 l8,7" stroke="#000" stroke-width="5.5" fill="none"/>
<path d="M816.6,1317.7 l8,7" stroke="#fff" stroke-width="1.8" fill="none"/>
<path d="M849.1,1343.9 L877.5,1333.8 L890.6,1348.7 L879.6,1356.7 L879.6,1380.7 L871.6,1384.7 L850.1,1377.5 Z" stroke="#000" stroke-width="2.6" fill="#fff"/>
<path d="M819.6,1330.7 L847,1313.9 L877.5,1333.8 L849.1,1343.9 Z" stroke="#000" stroke-width="2.6" fill="#fff"/>
<path d="M819.6,1330.7 L849.1,1343.9 L850.1,1377.5 L821.6,1362.2 Z" stroke="#000" stroke-width="2.6" fill="#fff"/>
<path d="M824.6,1337.7 L844.6,1346.7 L845.6,1367.7 L825.6,1357.7 Z" stroke="#111" stroke-width="1.1" fill="none"/>
<path d="M860.6,1354.7 l0,22" stroke="#000" stroke-width="3" fill="none"/>
<path d="M912,1384 L918,1387" stroke="#000" stroke-width="1.2"/>
<path d="M1539.5,2427.1 L1528.9,2421.5 A14,7 -61.9 0 0 1515.7,2446.2 L1526.3,2451.8 A14,7 -61.9 0 0 1539.5,2427.1 Z" stroke="#000" stroke-width="2.5" fill="#fff"/>
<path d="M1539.5,2427.1 A14,7 -61.9 0 0 1526.3,2451.8" stroke="#000" stroke-width="1.6" fill="none"/>
<path d="M1535.4,2448 L1524.8,2442.3 M1541,2438.2 L1530.4,2432.6" stroke="#000" stroke-width="1.1" fill="none"/>
<path d="M1544.2,2433.1 L1538.1,2429.8 A11,5.5 -61.9 0 0 1527.7,2449.2 L1533.9,2452.5 A11,5.5 -61.9 0 0 1544.2,2433.1 Z" stroke="#000" stroke-width="2.5" fill="#fff"/>
<path d="M1544.2,2433.1 A11,5.5 -61.9 0 0 1533.9,2452.5" stroke="#000" stroke-width="1.6" fill="none"/>
<path d="M1550.5,2440.4 L1542.6,2436.1 A7.5,3.8 -61.9 0 0 1535.5,2449.4 L1543.5,2453.6 A7.5,3.8 -61.9 0 0 1550.5,2440.4 Z" stroke="#000" stroke-width="2.5" fill="#fff"/>
<path d="M1550.5,2440.4 A7.5,3.8 -61.9 0 0 1543.5,2453.6" stroke="#000" stroke-width="2.5" fill="none"/>
<path d="M1540.8,2452.2 A7.5,3.8 -61.9 0 0 1547.9,2439 M1538.2,2450.8 A7.5,3.8 -61.9 0 0 1545.2,2437.6" stroke="#000" stroke-width="1.4" fill="none"/>
<path d="M1549.4,2442.6 A5,2.5 -61.9 0 0 1544.6,2451.4 A5,2.5 -61.9 0 0 1549.4,2442.6 Z" stroke="#000" stroke-width="1.5" fill="#fff"/>
<path d="M1546.9,2442.7 A4,2 -61.9 0 0 1543.4,2449.4" stroke="#000" stroke-width="1.1" fill="none"/>
<path d="M1444,2408 l14,5" stroke="#000" stroke-width="5.5" fill="none"/>
<path d="M1444,2408 l14,5" stroke="#fff" stroke-width="1.8" fill="none"/>
<path d="M1491,2422 L1519,2406 L1527,2415 L1527,2441 L1501,2455 L1491,2450 Z" stroke="#000" stroke-width="2.6" fill="#fff"/>
<path d="M1457,2403 L1491,2422 L1491,2450 L1483,2447 L1457.5,2433 Z" stroke="#000" stroke-width="2.6" fill="#fff"/>
<path d="M1457,2403 L1484,2387 L1519,2406 L1491,2422 Z" stroke="#000" stroke-width="2.6" fill="#fff"/>
<path d="M1467,2402 L1485,2392 L1509,2406 L1491,2416 Z" stroke="#111" stroke-width="1.1" fill="none"/>
<path d="M1485,2421 l0,26" stroke="#111" stroke-width="1.1" fill="none"/>
<path d="M634.8,1396.6 L586,1370.2 A10.3,5.2 -61.6 0 0 576.2,1388.3 L625,1414.8 A10.3,5.2 -61.6 0 0 634.8,1396.6 Z" stroke="#000" stroke-width="2.8" fill="#fff"/>
<path d="M634.8,1396.6 A10.3,5.2 -61.6 0 0 625,1414.8" stroke="#000" stroke-width="2.8" fill="none"/>
<path d="M586,1371 Q582,1380 589.500,1389" stroke="#111" stroke-width="1.2" fill="none"/>
<path d="M882.8,1541.4 L823.2,1508.6 A8.6,4.3 -61.2 0 0 815,1523.7 L874.6,1556.4 A8.6,4.3 -61.2 0 0 882.8,1541.4 Z" stroke="#000" stroke-width="2.8" fill="#fff"/>
<path d="M882.8,1541.4 A8.6,4.3 -61.2 0 0 874.6,1556.4" stroke="#000" stroke-width="2.8" fill="none"/>
<path d="M878,1541 Q873,1547 877,1557 L884,1543" stroke="#000" stroke-width="2.4" fill="#fff"/>
<path d="M557.2,1526.1 L543.6,1464.6 A11,3.8 -12.5 0 0 522.1,1469.4 L535.8,1530.9 A11,3.8 -12.5 0 0 557.2,1526.1 Z" stroke="#000" stroke-width="2.8" fill="#fff"/>
<path d="M557.2,1526.1 A11,3.8 -12.5 0 0 535.8,1530.9" stroke="#000" stroke-width="2.8" fill="none"/>
<path d="M522,1468 Q532,1477 536,1472 Q538,1466 544,1464" stroke="#000" stroke-width="2.2" fill="#fff"/>
<ellipse cx="651.7" cy="1415.3" rx="8" ry="16.5" transform="rotate(28 651.7 1415.3)" stroke="#000" stroke-width="3.6" fill="none"/>
<ellipse cx="651.7" cy="1415.3" rx="8" ry="16.5" transform="rotate(28 651.7 1415.3)" stroke="#fff" stroke-width="1.4" fill="none"/>
<path d="M659,1398.8 l1,-16" stroke="#000" stroke-width="3.2" fill="none"/>
<path d="M659,1398.8 l1,-16" stroke="#fff" stroke-width="1" fill="none" stroke-dasharray="2 2"/>
<path d="M654.2,1399.8 l9,-3 l1,5 l-9,3 Z" stroke="#000" stroke-width="1.6" fill="#fff"/>
<ellipse cx="800" cy="1501.7" rx="8" ry="16.5" transform="rotate(28 800 1501.7)" stroke="#000" stroke-width="3.6" fill="none"/>
<ellipse cx="800" cy="1501.7" rx="8" ry="16.5" transform="rotate(28 800 1501.7)" stroke="#fff" stroke-width="1.4" fill="none"/>
<path d="M807.3,1485.2 l1,-16" stroke="#000" stroke-width="3.2" fill="none"/>
<path d="M807.3,1485.2 l1,-16" stroke="#fff" stroke-width="1" fill="none" stroke-dasharray="2 2"/>
<path d="M802.5,1486.2 l9,-3 l1,5 l-9,3 Z" stroke="#000" stroke-width="1.6" fill="#fff"/>
<path d="M678.7,1429.9 L673.4,1427.1 A5.5,2.8 -61.5 0 0 668.2,1436.7 L673.4,1439.6 A5.5,2.8 -61.5 0 0 678.7,1429.9 Z" stroke="#000" stroke-width="2.8" fill="#fff"/>
<path d="M678.7,1429.9 A5.5,2.8 -61.5 0 0 673.4,1439.6" stroke="#000" stroke-width="1.6" fill="none"/>
<path d="M696.7,1438.6 L679.2,1429.1 A6.5,3.2 -61.5 0 0 673,1440.5 L690.5,1450 A6.5,3.2 -61.5 0 0 696.7,1438.6 Z" stroke="#000" stroke-width="2.8" fill="#fff"/>
<path d="M696.7,1438.6 A6.5,3.2 -61.5 0 0 690.5,1450" stroke="#000" stroke-width="1.6" fill="none"/>
<path d="M701.4,1438.3 L697.9,1436.4 A9,4.5 -61.5 0 0 689.3,1452.2 L692.8,1454.1 A9,4.5 -61.5 0 0 701.4,1438.3 Z" stroke="#000" stroke-width="2.8" fill="#fff"/>
<path d="M701.4,1438.3 A9,4.5 -61.5 0 0 692.8,1454.1" stroke="#000" stroke-width="1.6" fill="none"/>
<path d="M723.6,1439.5 L706,1430 A18.5,9.2 -61.5 0 0 688.3,1462.5 L705.9,1472 A18.5,9.2 -61.5 0 0 723.6,1439.5 Z" stroke="#000" stroke-width="2.8" fill="#fff"/>
<path d="M723.6,1439.5 A18.5,9.2 -61.5 0 0 705.9,1472" stroke="#000" stroke-width="1.6" fill="none"/>
<path d="M762.1,1456.5 L725.2,1436.5 A22,11 -61.5 0 0 704.2,1475.1 L741.1,1495.2 A22,11 -61.5 0 0 762.1,1456.5 Z" stroke="#000" stroke-width="2.8" fill="#fff"/>
<path d="M762.1,1456.5 A22,11 -61.5 0 0 741.1,1495.2" stroke="#000" stroke-width="1.6" fill="none"/>
<path d="M780.2,1484 L754.7,1470.1 A6.5,3.2 -61.5 0 0 748.5,1481.6 L774,1495.4 A6.5,3.2 -61.5 0 0 780.2,1484 Z" stroke="#000" stroke-width="2.8" fill="#fff"/>
<path d="M780.2,1484 A6.5,3.2 -61.5 0 0 774,1495.4" stroke="#000" stroke-width="1.6" fill="none"/>
<path d="M787.6,1489.2 L779.7,1484.9 A5.5,2.8 -61.5 0 0 774.5,1494.5 L782.4,1498.8 A5.5,2.8 -61.5 0 0 787.6,1489.2 Z" stroke="#000" stroke-width="2.8" fill="#fff"/>
<path d="M787.6,1489.2 A5.5,2.8 -61.5 0 0 782.4,1498.8" stroke="#000" stroke-width="2.8" fill="none"/>
<path d="M556,1590 L575,1675" stroke="#000" stroke-width="9.6" fill="none" stroke-linecap="butt" /><path d="M556,1590 L575,1675" stroke="#fff" stroke-width="4.2" fill="none" stroke-linecap="butt" />
<path d="M571,1676.5 Q575,1679 579,1675" stroke="#000" stroke-width="2.4" fill="none"/>
<ellipse cx="559.5" cy="1601" rx="17.5" ry="9" transform="rotate(-5 559.5 1601)" stroke="#000" stroke-width="2.6" fill="#fff"/>
<ellipse cx="559.3" cy="1592.5" rx="18" ry="9.5" transform="rotate(-5 559.3 1592.5)" stroke="#000" stroke-width="2.8" fill="#fff"/>
<ellipse cx="559.3" cy="1591" rx="12" ry="5.5" transform="rotate(-5 559.3 1591)" stroke="#000" stroke-width="1.2" fill="#fff"/>
<path d="M548.5,1550 L558,1592" stroke="#000" stroke-width="9.6" fill="none" stroke-linecap="butt" /><path d="M548.5,1550 L558,1592" stroke="#fff" stroke-width="4.2" fill="none" stroke-linecap="butt" />
<path d="M544.6,1551 Q545,1545 550,1546.5 L552.5,1549.5" stroke="#000" stroke-width="2.4" fill="#fff"/>
<path d="M1190.9,1363.4 L1207.7,1354.5 A12.5,6.2 62.2 0 0 1196.1,1332.4 L1179.3,1341.3 A12.5,6.2 62.2 0 0 1190.9,1363.4 Z" stroke="#000" stroke-width="2.6" fill="#fff"/>
<path d="M1190.9,1363.4 A12.5,6.2 62.2 0 0 1179.3,1341.3" stroke="#000" stroke-width="1.6" fill="none"/>
<path d="M1182.1,1339.8 A12.5,6.2 62.2 0 0 1193.7,1361.9 M1184.9,1338.3 A12.5,6.2 62.2 0 0 1196.5,1360.4 M1187.7,1336.8 A12.5,6.2 62.2 0 0 1199.3,1358.9 M1190.5,1335.4 A12.5,6.2 62.2 0 0 1202.1,1357.5 M1193.3,1333.9 A12.5,6.2 62.2 0 0 1204.9,1356" stroke="#000" stroke-width="1.4" fill="none"/>
<path d="M1180.9,1372.1 L1192.3,1366 A15.5,7.8 62.2 0 0 1177.9,1338.6 L1166.4,1344.7 A15.5,7.8 62.2 0 0 1180.9,1372.1 Z" stroke="#000" stroke-width="2.6" fill="#fff"/>
<path d="M1180.9,1372.1 A15.5,7.8 62.2 0 0 1166.4,1344.7" stroke="#000" stroke-width="1.6" fill="none"/>
<path d="M1164.2,1355.5 L1175.7,1349.4 M1169.7,1366.6 L1181.2,1360.5" stroke="#000" stroke-width="1.1" fill="none"/>
<path d="M1168.1,1373.7 L1178.7,1368.1 A11,5.5 62.2 0 0 1168.5,1348.7 L1157.9,1354.3 A11,5.5 62.2 0 0 1168.1,1373.7 Z" stroke="#000" stroke-width="2.6" fill="#fff"/>
<path d="M1168.1,1373.7 A11,5.5 62.2 0 0 1157.9,1354.3" stroke="#000" stroke-width="2.6" fill="none"/>
<path d="M1160.5,1352.9 A11,5.5 62.2 0 0 1170.8,1372.3 M1163.2,1351.5 A11,5.5 62.2 0 0 1173.4,1370.9 M1165.8,1350.1 A11,5.5 62.2 0 0 1176.1,1369.5" stroke="#000" stroke-width="1.4" fill="none"/>
<path d="M1166.7,1371.1 A8,4 62.2 0 0 1159.3,1356.9 A8,4 62.2 0 0 1166.7,1371.1 Z" stroke="#000" stroke-width="1.5" fill="#fff"/>
<path d="M1168,1368.2 A6.4,3.2 62.2 0 0 1162.3,1357.5" stroke="#000" stroke-width="1.1" fill="none"/>
<ellipse cx="1220.6" cy="1333.8" rx="10.2" ry="15" transform="rotate(-22 1220.6 1333.8)" stroke="#000" stroke-width="3.2" fill="#fff"/>
<ellipse cx="1220.6" cy="1333.8" rx="7.4" ry="12" transform="rotate(-22 1220.6 1333.8)" stroke="#000" stroke-width="1.1" fill="#fff"/>
<path d="M1126.9,1408.8 L1150.7,1396.2 A19,9.5 62.2 0 0 1133,1362.6 L1109.1,1375.2 A19,9.5 62.2 0 0 1126.9,1408.8 Z" stroke="#000" stroke-width="2.8" fill="#fff"/>
<path d="M1126.9,1408.8 A19,9.5 62.2 0 0 1109.1,1375.2" stroke="#000" stroke-width="2.8" fill="none"/>
<path d="M1106.5,1388.4 L1130.4,1375.8 M1113.2,1402 L1137.1,1389.4" stroke="#000" stroke-width="1.1" fill="none"/>
<path d="M1124,1389 C1120,1391.5 1106.7,1397.8 1100,1404 C1093.3,1410.2 1088.2,1418.7 1084,1426 C1079.8,1433.3 1076.7,1442 1075,1448 C1073.3,1454 1073.9,1459.7 1073.7,1462" stroke="#000" stroke-width="23" fill="none" stroke-linecap="butt" /><path d="M1124,1389 C1120,1391.5 1106.7,1397.8 1100,1404 C1093.3,1410.2 1088.2,1418.7 1084,1426 C1079.8,1433.3 1076.7,1442 1075,1448 C1073.3,1454 1073.9,1459.7 1073.7,1462" stroke="#fff" stroke-width="17.4" fill="none" stroke-linecap="butt" />
<clipPath id="br1074"><rect x="1057.5" y="1516" width="33" height="56"/></clipPath>
<path d="M1057.5,1516 L1057.5,1568 Q1063.5,1577 1076,1565 Q1085.5,1578 1090.5,1566 L1090.5,1516" stroke="#000" stroke-width="2.8" fill="#fff"/>
<path d="M1057.5,1468 l33,29.7 M1090.5,1468 l-33,29.7 M1057.5,1474 l33,29.7 M1090.5,1474 l-33,29.7 M1057.5,1480 l33,29.7 M1090.5,1480 l-33,29.7 M1057.5,1486 l33,29.7 M1090.5,1486 l-33,29.7 M1057.5,1492 l33,29.7 M1090.5,1492 l-33,29.7 M1057.5,1498 l33,29.7 M1090.5,1498 l-33,29.7 M1057.5,1504 l33,29.7 M1090.5,1504 l-33,29.7 M1057.5,1510 l33,29.7 M1090.5,1510 l-33,29.7 M1057.5,1516 l33,29.7 M1090.5,1516 l-33,29.7 M1057.5,1522 l33,29.7 M1090.5,1522 l-33,29.7 M1057.5,1528 l33,29.7 M1090.5,1528 l-33,29.7 M1057.5,1534 l33,29.7 M1090.5,1534 l-33,29.7 M1057.5,1540 l33,29.7 M1090.5,1540 l-33,29.7 M1057.5,1546 l33,29.7 M1090.5,1546 l-33,29.7 M1057.5,1552 l33,29.7 M1090.5,1552 l-33,29.7 M1057.5,1558 l33,29.7 M1090.5,1558 l-33,29.7 M1057.5,1564 l33,29.7 M1090.5,1564 l-33,29.7 M1057.5,1570 l33,29.7 M1090.5,1570 l-33,29.7 M1057.5,1576 l33,29.7 M1090.5,1576 l-33,29.7 M1057.5,1582 l33,29.7 M1090.5,1582 l-33,29.7 M1057.5,1588 l33,29.7 M1090.5,1588 l-33,29.7 M1057.5,1594 l33,29.7 M1090.5,1594 l-33,29.7" stroke="#000" stroke-width="1" clip-path="url(#br1074)"/>
<path d="M1077,1564 q6,6 12,-2" stroke="#000" stroke-width="2.2" fill="none"/>
<path d="M1053.5,1512 L1053.5,1517 A20.5,5.7 180 0 0 1094.5,1517 L1094.5,1512 A20.5,5.7 180 0 0 1053.5,1512 Z" stroke="#000" stroke-width="2.8" fill="#fff"/>
<path d="M1053.5,1512 A20.5,5.7 180 0 0 1094.5,1512" stroke="#000" stroke-width="1.6" fill="none"/>
<path d="M1055,1478 L1055,1512 A19,5.3 180 0 0 1093,1512 L1093,1478 A19,5.3 180 0 0 1055,1478 Z" stroke="#000" stroke-width="2.8" fill="#fff"/>
<path d="M1055,1478 A19,5.3 180 0 0 1093,1478" stroke="#000" stroke-width="1.6" fill="none"/>
<path d="M1053.5,1474 L1053.5,1478 A20.5,5.7 180 0 0 1094.5,1478 L1094.5,1474 A20.5,5.7 180 0 0 1053.5,1474 Z" stroke="#000" stroke-width="2.8" fill="#fff"/>
<path d="M1053.5,1474 A20.5,5.7 180 0 0 1094.5,1474" stroke="#000" stroke-width="1.6" fill="none"/>
<path d="M1055,1458 L1055,1474 A19,5.3 180 0 0 1093,1474 L1093,1458 A19,5.3 180 0 0 1055,1458 Z" stroke="#000" stroke-width="2.8" fill="#fff"/>
<path d="M1055,1458 A19,5.3 180 0 0 1093,1458" stroke="#000" stroke-width="2.8" fill="none"/>
<path d="M1082.5,1453.2 L1082.5,1469.2 M1067.3,1453 L1067.3,1469" stroke="#000" stroke-width="1.1" fill="none"/>
<path d="M1291.9,1401.8 L1315.7,1389.2 A19,9.5 62.2 0 0 1298,1355.6 L1274.1,1368.2 A19,9.5 62.2 0 0 1291.9,1401.8 Z" stroke="#000" stroke-width="2.8" fill="#fff"/>
<path d="M1291.9,1401.8 A19,9.5 62.2 0 0 1274.1,1368.2" stroke="#000" stroke-width="2.8" fill="none"/>
<path d="M1271.5,1381.4 L1295.4,1368.8 M1278.2,1395 L1302.1,1382.4" stroke="#000" stroke-width="1.1" fill="none"/>
<path d="M1289,1383.5 C1285.2,1385.8 1272.2,1391.6 1266,1397 C1259.8,1402.4 1255.2,1409.5 1251.5,1416 C1247.8,1422.5 1245,1430 1243.5,1436 C1242,1442 1242.5,1449.3 1242.3,1452" stroke="#000" stroke-width="23" fill="none" stroke-linecap="butt" /><path d="M1289,1383.5 C1285.2,1385.8 1272.2,1391.6 1266,1397 C1259.8,1402.4 1255.2,1409.5 1251.5,1416 C1247.8,1422.5 1245,1430 1243.5,1436 C1242,1442 1242.5,1449.3 1242.3,1452" stroke="#fff" stroke-width="17.4" fill="none" stroke-linecap="butt" />
<path d="M1225.5,1514 L1225.5,1553 Q1231.5,1562 1244,1549 Q1253.5,1562 1258.5,1549 L1258.5,1514" stroke="#000" stroke-width="2.8" fill="#fff"/>
<path d="M1245,1549 q6,6 12,-2" stroke="#000" stroke-width="2.2" fill="none"/>
<path d="M1221.5,1510 L1221.5,1515 A20.5,5.7 180 0 0 1262.5,1515 L1262.5,1510 A20.5,5.7 180 0 0 1221.5,1510 Z" stroke="#000" stroke-width="2.8" fill="#fff"/>
<path d="M1221.5,1510 A20.5,5.7 180 0 0 1262.5,1510" stroke="#000" stroke-width="1.6" fill="none"/>
<path d="M1223,1466 L1223,1510 A19,5.3 180 0 0 1261,1510 L1261,1466 A19,5.3 180 0 0 1223,1466 Z" stroke="#000" stroke-width="2.8" fill="#fff"/>
<path d="M1223,1466 A19,5.3 180 0 0 1261,1466" stroke="#000" stroke-width="1.6" fill="none"/>
<path d="M1221.5,1462 L1221.5,1466 A20.5,5.7 180 0 0 1262.5,1466 L1262.5,1462 A20.5,5.7 180 0 0 1221.5,1462 Z" stroke="#000" stroke-width="2.8" fill="#fff"/>
<path d="M1221.5,1462 A20.5,5.7 180 0 0 1262.5,1462" stroke="#000" stroke-width="1.6" fill="none"/>
<path d="M1223,1446 L1223,1462 A19,5.3 180 0 0 1261,1462 L1261,1446 A19,5.3 180 0 0 1223,1446 Z" stroke="#000" stroke-width="2.8" fill="#fff"/>
<path d="M1223,1446 A19,5.3 180 0 0 1261,1446" stroke="#000" stroke-width="2.8" fill="none"/>
<path d="M1250.5,1441.2 L1250.5,1457.2 M1235.3,1441 L1235.3,1457" stroke="#000" stroke-width="1.1" fill="none"/>
<ellipse cx="1591.2" cy="2299" rx="24.2" ry="14.8" stroke="#000" stroke-width="2.6" fill="#fff"/>
<ellipse cx="1591.2" cy="2295.4" rx="24.2" ry="14.8" stroke="#000" stroke-width="2.8" fill="#fff"/>
<ellipse cx="1591.2" cy="2295.4" rx="13.5" ry="7.4" stroke="#000" stroke-width="2.6" fill="#fff"/>
<path d="M1577.7,2393 L1577.7,2413 A13.3,5.9 180 0 0 1604.3,2413 L1604.3,2393 A13.3,5.9 180 0 0 1577.7,2393 Z" stroke="#000" stroke-width="2.8" fill="#fff"/>
<path d="M1577.7,2393 A13.3,5.9 180 0 0 1604.3,2393" stroke="#000" stroke-width="1.6" fill="none"/>
<path d="M1604.3,2396.3 A13.3,5.9 180 0 0 1577.7,2396.3 M1604.3,2399.7 A13.3,5.9 180 0 0 1577.7,2399.7 M1604.3,2403 A13.3,5.9 180 0 0 1577.7,2403 M1604.3,2406.3 A13.3,5.9 180 0 0 1577.7,2406.3 M1604.3,2409.7 A13.3,5.9 180 0 0 1577.7,2409.7" stroke="#000" stroke-width="1.4" fill="none"/>
<path d="M1576,2388 L1576,2393 A15,6.6 180 0 0 1606,2393 L1606,2388 A15,6.6 180 0 0 1576,2388 Z" stroke="#000" stroke-width="2.8" fill="#fff"/>
<path d="M1576,2388 A15,6.6 180 0 0 1606,2388" stroke="#000" stroke-width="1.6" fill="none"/>
<path d="M1568.5,2335 L1568.5,2388 A22.5,9.9 180 0 0 1613.5,2388 L1613.5,2335 A22.5,9.9 180 0 0 1568.5,2335 Z" stroke="#000" stroke-width="2.8" fill="#fff"/>
<path d="M1568.5,2335 A22.5,9.9 180 0 0 1613.5,2335" stroke="#000" stroke-width="2.8" fill="none"/>
<path d="M1601.1,2326.2 L1601.1,2379.2 M1583.1,2325.7 L1583.1,2378.7" stroke="#000" stroke-width="1.1" fill="none"/>
<path d="M1578,2335 A13,5.7 180 0 0 1604,2335 A13,5.7 180 0 0 1578,2335 Z" stroke="#000" stroke-width="1.5" fill="#fff"/>
<path d="M1581.1,2337.9 A10.4,4.6 180 0 0 1600.9,2337.9" stroke="#000" stroke-width="1.1" fill="none"/>
<path d="M1610.4,2457.3 L1566.6,2437.6 A20.5,10.2 -65.7 0 0 1549.8,2474.9 L1593.5,2494.7 A20.5,10.2 -65.7 0 0 1610.4,2457.3 Z" stroke="#000" stroke-width="2.8" fill="#fff"/>
<path d="M1610.4,2457.3 A20.5,10.2 -65.7 0 0 1593.5,2494.7" stroke="#000" stroke-width="1.6" fill="none"/>
<path d="M1628,2471.8 L1607.9,2462.7 A14.5,7.2 -65.7 0 0 1596,2489.2 L1616,2498.2 A14.5,7.2 -65.7 0 0 1628,2471.8 Z" stroke="#000" stroke-width="2.8" fill="#fff"/>
<path d="M1628,2471.8 A14.5,7.2 -65.7 0 0 1616,2498.2" stroke="#000" stroke-width="2.8" fill="none"/>
<path d="M1613.2,2496.9 A14.5,7.2 -65.7 0 0 1625.1,2470.5 M1610.3,2495.6 A14.5,7.2 -65.7 0 0 1622.2,2469.2 M1607.4,2494.3 A14.5,7.2 -65.7 0 0 1619.4,2467.9 M1604.6,2493.1 A14.5,7.2 -65.7 0 0 1616.5,2466.6 M1601.7,2491.8 A14.5,7.2 -65.7 0 0 1613.6,2465.3 M1598.9,2490.5 A14.5,7.2 -65.7 0 0 1610.8,2464" stroke="#000" stroke-width="1.4" fill="none"/>
<path d="M1626.1,2475.9 A10,5 -65.7 0 0 1617.9,2494.1 A10,5 -65.7 0 0 1626.1,2475.9 Z" stroke="#000" stroke-width="1.5" fill="#fff"/>
<path d="M1622.7,2477 A8,4 -65.7 0 0 1616.4,2490.8" stroke="#000" stroke-width="1.1" fill="none"/>
<path d="M1572.7,2437 L1572.7,2461 A19.7,9.8 180 0 0 1612.1,2461 L1612.1,2437 A19.7,9.8 180 0 0 1572.7,2437 Z" stroke="#000" stroke-width="2.8" fill="#fff"/>
<path d="M1572.7,2437 A19.7,9.8 180 0 0 1612.1,2437" stroke="#000" stroke-width="2.8" fill="none"/>
<path d="M1579.4,2437 A13,6.5 180 0 0 1605.4,2437 A13,6.5 180 0 0 1579.4,2437 Z" stroke="#000" stroke-width="1.5" fill="#fff"/>
<path d="M1582.5,2440.1 A10.4,5.2 180 0 0 1602.3,2440.1" stroke="#000" stroke-width="1.1" fill="none"/>
<path d="M1673.8,2494.9 L1652.6,2483.6 A20,10 -61.9 0 0 1633.8,2518.9 L1655,2530.2 A20,10 -61.9 0 0 1673.8,2494.9 Z" stroke="#000" stroke-width="2.8" fill="#fff"/>
<path d="M1673.8,2494.9 A20,10 -61.9 0 0 1655,2530.2" stroke="#000" stroke-width="1.6" fill="none"/>
<path d="M1668,2524.7 L1646.8,2513.4 M1675.9,2510.8 L1654.8,2499.5" stroke="#000" stroke-width="1.1" fill="none"/>
<path d="M1673.9,2507.4 L1668.6,2504.6 A9,4.5 -61.9 0 0 1660.1,2520.5 L1665.4,2523.3 A9,4.5 -61.9 0 0 1673.9,2507.4 Z" stroke="#000" stroke-width="2.8" fill="#fff"/>
<path d="M1673.9,2507.4 A9,4.5 -61.9 0 0 1665.4,2523.3" stroke="#000" stroke-width="1.6" fill="none"/>
<path d="M1728.4,2528.6 L1677.2,2501.3 A16,8 -61.9 0 0 1662.1,2529.5 L1713.3,2556.8 A16,8 -61.9 0 0 1728.4,2528.6 Z" stroke="#000" stroke-width="2.8" fill="#fff"/>
<path d="M1728.4,2528.6 A16,8 -61.9 0 0 1713.3,2556.8" stroke="#000" stroke-width="1.6" fill="none"/>
<path d="M1732.6,2529.1 L1729.1,2527.3 A17.5,8.8 -61.9 0 0 1712.6,2558.1 L1716.1,2560 A17.5,8.8 -61.9 0 0 1732.6,2529.1 Z" stroke="#000" stroke-width="2.8" fill="#fff"/>
<path d="M1732.6,2529.1 A17.5,8.8 -61.9 0 0 1716.1,2560" stroke="#000" stroke-width="1.6" fill="none"/>
<path d="M1747.2,2544.3 L1729.5,2534.9 A11,5.5 -61.9 0 0 1719.2,2554.3 L1736.8,2563.7 A11,5.5 -61.9 0 0 1747.2,2544.3 Z" stroke="#000" stroke-width="2.8" fill="#fff"/>
<path d="M1747.2,2544.3 A11,5.5 -61.9 0 0 1736.8,2563.7" stroke="#000" stroke-width="2.8" fill="none"/>
<path d="M1737,2542 Q1752,2548 1748,2560 Q1744,2566 1738,2564" stroke="#000" stroke-width="2.4" fill="#fff"/>
<path d="M1819.5,2250 L1819.5,2312 Q1824,2320 1833,2309 Q1843,2319 1850.500,2308 L1850.5,2250 Z" stroke="#000" stroke-width="2.8" fill="#fff"/>
<path d="M1838,2306 q5,6 10,-2" stroke="#000" stroke-width="2.2" fill="none"/>
<path d="M1816.2,2249.5 L1816.2,2254.5 A18.5,5.5 180 0 0 1853.2,2254.5 L1853.2,2249.5 A18.5,5.5 180 0 0 1816.2,2249.5 Z" stroke="#000" stroke-width="2.8" fill="#fff"/>
<path d="M1816.2,2249.5 A18.5,5.5 180 0 0 1853.2,2249.5" stroke="#000" stroke-width="1.6" fill="none"/>
<path d="M1817.2,2220.5 L1817.2,2249.5 A17.5,5.2 180 0 0 1852.2,2249.5 L1852.2,2220.5 A17.5,5.2 180 0 0 1817.2,2220.5 Z" stroke="#000" stroke-width="2.8" fill="#fff"/>
<path d="M1817.2,2220.5 A17.5,5.2 180 0 0 1852.2,2220.5" stroke="#000" stroke-width="1.6" fill="none"/>
<path d="M1816.2,2215.5 L1816.2,2220.5 A18.5,5.5 180 0 0 1853.2,2220.5 L1853.2,2215.5 A18.5,5.5 180 0 0 1816.2,2215.5 Z" stroke="#000" stroke-width="2.8" fill="#fff"/>
<path d="M1816.2,2215.5 A18.5,5.5 180 0 0 1853.2,2215.5" stroke="#000" stroke-width="1.6" fill="none"/>
<path d="M1817.7,2199.5 L1817.7,2215.5 A17,5.1 180 0 0 1851.7,2215.5 L1851.7,2199.5 A17,5.1 180 0 0 1817.7,2199.5 Z" stroke="#000" stroke-width="2.8" fill="#fff"/>
<path d="M1817.7,2199.5 A17,5.1 180 0 0 1851.7,2199.5" stroke="#000" stroke-width="1.6" fill="none"/>
<path d="M1842.4,2194.9 L1842.4,2210.9 M1828.8,2194.7 L1828.8,2210.7" stroke="#000" stroke-width="1.1" fill="none"/>
<path d="M1820.7,2194.5 L1820.7,2199.5 A14,4.2 180 0 0 1848.7,2199.5 L1848.7,2194.5 A14,4.2 180 0 0 1820.7,2194.5 Z" stroke="#000" stroke-width="2.8" fill="#fff"/>
<path d="M1820.7,2194.5 A14,4.2 180 0 0 1848.7,2194.5" stroke="#000" stroke-width="1.6" fill="none"/>
<path d="M1815.7,2177.5 L1815.7,2194.5 A19,5.7 180 0 0 1853.7,2194.5 L1853.7,2177.5 A19,5.7 180 0 0 1815.7,2177.5 Z" stroke="#000" stroke-width="2.8" fill="#fff"/>
<path d="M1815.7,2177.5 A19,5.7 180 0 0 1853.7,2177.5" stroke="#000" stroke-width="2.8" fill="none"/>
<path d="M1843.2,2172.4 L1843.2,2189.4 M1828,2172.2 L1828,2189.2" stroke="#000" stroke-width="1.1" fill="none"/>
<path d="M1823.7,2177.5 A11,3.3 180 0 0 1845.7,2177.5 A11,3.3 180 0 0 1823.7,2177.5 Z" stroke="#000" stroke-width="1.5" fill="#fff"/>
<path d="M1826.3,2179.8 A8.8,2.6 180 0 0 1843.1,2179.8" stroke="#000" stroke-width="1.1" fill="none"/>
<path d="M2075.8,2399.1 L2098.8,2387 A20,10 62.2 0 0 2080.1,2351.6 L2057.1,2363.8 A20,10 62.2 0 0 2075.8,2399.1 Z" stroke="#000" stroke-width="2.8" fill="#fff"/>
<path d="M2075.8,2399.1 A20,10 62.2 0 0 2057.1,2363.8" stroke="#000" stroke-width="1.6" fill="none"/>
<path d="M2054.3,2377.6 L2077.3,2365.5 M2061.4,2392 L2084.4,2379.9" stroke="#000" stroke-width="1.1" fill="none"/>
<path d="M2063.6,2393.1 L2070.6,2389.4 A9,4.5 62.2 0 0 2062.2,2373.5 L2055.2,2377.2 A9,4.5 62.2 0 0 2063.6,2393.1 Z" stroke="#000" stroke-width="2.8" fill="#fff"/>
<path d="M2063.6,2393.1 A9,4.5 62.2 0 0 2055.2,2377.2" stroke="#000" stroke-width="1.6" fill="none"/>
<path d="M2025.9,2420.4 L2066.6,2398.9 A15.5,7.8 62.2 0 0 2052.1,2371.5 L2011.4,2393 A15.5,7.8 62.2 0 0 2025.9,2420.4 Z" stroke="#000" stroke-width="2.8" fill="#fff"/>
<path d="M2025.9,2420.4 A15.5,7.8 62.2 0 0 2011.4,2393" stroke="#000" stroke-width="1.6" fill="none"/>
<path d="M2023.1,2423.6 L2026.6,2421.7 A17,8.5 62.2 0 0 2010.7,2391.6 L2007.2,2393.5 A17,8.5 62.2 0 0 2023.1,2423.6 Z" stroke="#000" stroke-width="2.8" fill="#fff"/>
<path d="M2023.1,2423.6 A17,8.5 62.2 0 0 2007.2,2393.5" stroke="#000" stroke-width="1.6" fill="none"/>
<path d="M2005.9,2425.3 L2020.1,2417.8 A10.5,5.2 62.2 0 0 2010.2,2399.2 L1996.1,2406.7 A10.5,5.2 62.2 0 0 2005.9,2425.3 Z" stroke="#000" stroke-width="2.8" fill="#fff"/>
<path d="M2005.9,2425.3 A10.5,5.2 62.2 0 0 1996.1,2406.7" stroke="#000" stroke-width="2.8" fill="none"/>
<path d="M2007,2405 Q1992,2412 1997,2425 Q2001,2431 2008,2428" stroke="#000" stroke-width="2.4" fill="#fff"/>
<path d="M1971.5,2278 L1971.5,2270 A7,2.8 0 0 0 1957.5,2270 L1957.5,2278 A7,2.8 0 0 0 1971.5,2278 Z" stroke="#000" stroke-width="2.4" fill="#fff"/>
<path d="M1971.5,2278 A7,2.8 0 0 0 1957.5,2278" stroke="#000" stroke-width="1.6" fill="none"/>
<path d="M1970,2284 L1970,2278 A5.5,2.2 0 0 0 1959,2278 L1959,2284 A5.5,2.2 0 0 0 1970,2284 Z" stroke="#000" stroke-width="2.4" fill="#fff"/>
<path d="M1970,2284 A5.5,2.2 0 0 0 1959,2284" stroke="#000" stroke-width="2.4" fill="none"/>
<path d="M1946.8,2225.6 L1935.9,2220.6 A12,6 -65.5 0 0 1925.9,2242.5 L1936.9,2247.5 A12,6 -65.5 0 0 1946.8,2225.6 Z" stroke="#000" stroke-width="2.8" fill="#fff"/>
<path d="M1946.8,2225.6 A12,6 -65.5 0 0 1936.9,2247.5" stroke="#000" stroke-width="1.6" fill="none"/>
<path d="M1990.7,2240.1 L1948.9,2221.1 A17,8.5 -65.5 0 0 1934.8,2252 L1976.7,2271.1 A17,8.5 -65.5 0 0 1990.7,2240.1 Z" stroke="#000" stroke-width="2.8" fill="#fff"/>
<path d="M1990.7,2240.1 A17,8.5 -65.5 0 0 1976.7,2271.1" stroke="#000" stroke-width="1.6" fill="none"/>
<path d="M1987.4,2265.7 L1945.6,2246.6 M1993.4,2253.5 L1951.5,2234.4" stroke="#000" stroke-width="1.1" fill="none"/>
<path d="M2004.5,2248.5 L1989.9,2241.9 A15,7.5 -65.5 0 0 1977.5,2269.2 L1992,2275.9 A15,7.5 -65.5 0 0 2004.5,2248.5 Z" stroke="#000" stroke-width="2.8" fill="#fff"/>
<path d="M2004.5,2248.5 A15,7.5 -65.5 0 0 1992,2275.9" stroke="#000" stroke-width="1.6" fill="none"/>
<path d="M2001.6,2271.1 L1987,2264.5 M2006.8,2260.3 L1992.3,2253.7" stroke="#000" stroke-width="1.1" fill="none"/>
<path d="M2015.1,2258.9 L2002.4,2253.1 A10,5 -65.5 0 0 1994.1,2271.3 L2006.9,2277.1 A10,5 -65.5 0 0 2015.1,2258.9 Z" stroke="#000" stroke-width="2.8" fill="#fff"/>
<path d="M2015.1,2258.9 A10,5 -65.5 0 0 2006.9,2277.1" stroke="#000" stroke-width="2.8" fill="none"/>
<path d="M2004.3,2275.9 A10,5 -65.5 0 0 2012.6,2257.7 M2001.8,2274.8 A10,5 -65.5 0 0 2010,2256.6 M1999.2,2273.6 A10,5 -65.5 0 0 2007.5,2255.4 M1996.7,2272.5 A10,5 -65.5 0 0 2004.9,2254.3" stroke="#000" stroke-width="1.4" fill="none"/>
<path d="M2087.8,2312.7 L2204.5,2251 A25,12.5 62.2 0 0 2181.2,2206.8 L2064.5,2268.5 A25,12.5 62.2 0 0 2087.8,2312.7 Z" stroke="#000" stroke-width="3" fill="#fff"/>
<path d="M2087.8,2312.7 A25,12.5 62.2 0 0 2064.5,2268.5" stroke="#000" stroke-width="1.6" fill="none"/>
<path d="M2046.3,2336.9 L2088.8,2314.5 A27,13.5 62.2 0 0 2063.5,2266.7 L2021.1,2289.1 A27,13.5 62.2 0 0 2046.3,2336.9 Z" stroke="#000" stroke-width="3" fill="#fff"/>
<path d="M2046.3,2336.9 A27,13.5 62.2 0 0 2021.1,2289.1" stroke="#000" stroke-width="3" fill="none"/>
<path d="M2041.6,2328 A17,8.5 62.2 0 0 2025.8,2298 A17,8.5 62.2 0 0 2041.6,2328 Z" stroke="#000" stroke-width="1.5" fill="#fff"/>
<path d="M2042.9,2322.8 A13.6,6.8 62.2 0 0 2030.8,2299.9" stroke="#000" stroke-width="1.1" fill="none"/>
<path d="M2101.4,2298.4 L2071.4,2282.3 A20,10 -61.9 0 0 2052.6,2317.6 L2082.6,2333.6 A20,10 -61.9 0 0 2101.4,2298.4 Z" stroke="#000" stroke-width="3" fill="#fff"/>
<path d="M2101.4,2298.4 A20,10 -61.9 0 0 2082.6,2333.6" stroke="#000" stroke-width="3" fill="none"/>
<path d="M2097.7,2305.4 A12,6 -61.9 0 0 2086.3,2326.6 A12,6 -61.9 0 0 2097.7,2305.4 Z" stroke="#000" stroke-width="1.5" fill="#fff"/>
<path d="M2093.7,2306.6 A9.6,4.8 -61.9 0 0 2085.1,2322.7" stroke="#000" stroke-width="1.1" fill="none"/>
<path d="M2015,2288 Q2016,2268 2036,2266 L2055,2277" stroke="#000" stroke-width="3" fill="#fff"/>
<path d="M2248.3,2208.3 L2267.7,2198 A14,7 62.2 0 0 2254.7,2173.3 L2235.2,2183.5 A14,7 62.2 0 0 2248.3,2208.3 Z" stroke="#000" stroke-width="2.8" fill="#fff"/>
<path d="M2248.3,2208.3 A14,7 62.2 0 0 2235.2,2183.5" stroke="#000" stroke-width="1.6" fill="none"/>
<path d="M2238,2182.1 A14,7 62.2 0 0 2251.1,2206.8 M2240.8,2180.6 A14,7 62.2 0 0 2253.9,2205.4 M2243.6,2179.1 A14,7 62.2 0 0 2256.6,2203.9 M2246.3,2177.7 A14,7 62.2 0 0 2259.4,2202.4 M2249.1,2176.2 A14,7 62.2 0 0 2262.2,2201 M2251.9,2174.7 A14,7 62.2 0 0 2265,2199.5" stroke="#000" stroke-width="1.4" fill="none"/>
<path d="M2237.3,2217.5 L2249.7,2211 A17,8.5 62.2 0 0 2233.8,2180.9 L2221.4,2187.4 A17,8.5 62.2 0 0 2237.3,2217.5 Z" stroke="#000" stroke-width="2.8" fill="#fff"/>
<path d="M2237.3,2217.5 A17,8.5 62.2 0 0 2221.4,2187.4" stroke="#000" stroke-width="1.6" fill="none"/>
<path d="M2219.1,2199.2 L2231.5,2192.7 M2225.1,2211.4 L2237.5,2204.9" stroke="#000" stroke-width="1.1" fill="none"/>
<path d="M2222.6,2219.6 L2235,2213.1 A12,6 62.2 0 0 2223.8,2191.9 L2211.4,2198.4 A12,6 62.2 0 0 2222.6,2219.6 Z" stroke="#000" stroke-width="2.8" fill="#fff"/>
<path d="M2222.6,2219.6 A12,6 62.2 0 0 2211.4,2198.4" stroke="#000" stroke-width="2.8" fill="none"/>
<path d="M2213.9,2197.1 A12,6 62.2 0 0 2225.1,2218.3 M2216.3,2195.8 A12,6 62.2 0 0 2227.6,2217 M2218.8,2194.5 A12,6 62.2 0 0 2230,2215.7 M2221.3,2193.2 A12,6 62.2 0 0 2232.5,2214.4" stroke="#000" stroke-width="1.4" fill="none"/>
<path d="M2221.2,2217 A9,4.5 62.2 0 0 2212.8,2201 A9,4.5 62.2 0 0 2221.2,2217 Z" stroke="#000" stroke-width="1.5" fill="#fff"/>
<path d="M2222.5,2213.8 A7.2,3.6 62.2 0 0 2216.1,2201.7" stroke="#000" stroke-width="1.1" fill="none"/>
<path d="M1999.5,2354.7 L2015.4,2346.3 A16,8 62.2 0 0 2000.5,2318 L1984.6,2326.4 A16,8 62.2 0 0 1999.5,2354.7 Z" stroke="#000" stroke-width="2.8" fill="#fff"/>
<path d="M1999.5,2354.7 A16,8 62.2 0 0 1984.6,2326.4" stroke="#000" stroke-width="1.6" fill="none"/>
<path d="M1987.2,2325 A16,8 62.2 0 0 2002.2,2353.3 M1989.9,2323.6 A16,8 62.2 0 0 2004.8,2351.9 M1992.5,2322.2 A16,8 62.2 0 0 2007.5,2350.5 M1995.2,2320.8 A16,8 62.2 0 0 2010.1,2349.1 M1997.8,2319.4 A16,8 62.2 0 0 2012.8,2347.7" stroke="#000" stroke-width="1.4" fill="none"/>
<path d="M1986.8,2367.1 L2001.8,2359.1 A21,10.5 62.2 0 0 1982.2,2322 L1967.2,2329.9 A21,10.5 62.2 0 0 1986.8,2367.1 Z" stroke="#000" stroke-width="2.8" fill="#fff"/>
<path d="M1986.8,2367.1 A21,10.5 62.2 0 0 1967.2,2329.9" stroke="#000" stroke-width="2.8" fill="none"/>
<path d="M1964.3,2344.5 L1979.3,2336.6 M1971.7,2359.6 L1986.8,2351.7" stroke="#000" stroke-width="1.1" fill="none"/>
<path d="M1983.5,2360.9 A14,7 62.2 0 0 1970.5,2336.1 A14,7 62.2 0 0 1983.5,2360.9 Z" stroke="#000" stroke-width="1.5" fill="#fff"/>
<path d="M1984.8,2356.4 A11.2,5.6 62.2 0 0 1974.8,2337.6" stroke="#000" stroke-width="1.1" fill="none"/>
<path d="M2101.1,2336.3 L2120.5,2346.6 A10.5,5.2 118.1 0 0 2130.4,2328.1 L2110.9,2317.7 A10.5,5.2 118.1 0 0 2101.1,2336.3 Z" stroke="#000" stroke-width="2.6" fill="#fff"/>
<path d="M2101.1,2336.3 A10.5,5.2 118.1 0 0 2110.9,2317.7" stroke="#000" stroke-width="2.6" fill="none"/>
<path d="M2113.7,2319.2 A10.5,5.2 118.1 0 0 2103.8,2337.7 M2116.5,2320.7 A10.5,5.2 118.1 0 0 2106.6,2339.2 M2119.3,2322.2 A10.5,5.2 118.1 0 0 2109.4,2340.7 M2122,2323.7 A10.5,5.2 118.1 0 0 2112.1,2342.2 M2124.8,2325.1 A10.5,5.2 118.1 0 0 2114.9,2343.7 M2127.6,2326.6 A10.5,5.2 118.1 0 0 2117.7,2345.1" stroke="#000" stroke-width="1.4" fill="none"/>
<path d="M2118,2322 L2137,2318 L2155,2337 L2151,2356 L2132,2372 L2118,2366 L2112,2343 Z" stroke="#000" stroke-width="2.8" fill="#fff"/>
<path d="M2137,2318 L2134,2340 L2112,2343 M2134,2340 L2151,2356" stroke="#111" stroke-width="1.2" fill="none"/>
<path d="M2120.3,2374.9 L2139.8,2364.7 A13.5,6.8 62.2 0 0 2127.1,2340.8 L2107.7,2351.1 A13.5,6.8 62.2 0 0 2120.3,2374.9 Z" stroke="#000" stroke-width="2.8" fill="#fff"/>
<path d="M2120.3,2374.9 A13.5,6.8 62.2 0 0 2107.7,2351.1" stroke="#000" stroke-width="2.8" fill="none"/>
<path d="M2110.5,2349.6 A13.5,6.8 62.2 0 0 2123.1,2373.5 M2113.3,2348.1 A13.5,6.8 62.2 0 0 2125.9,2372 M2116,2346.7 A13.5,6.8 62.2 0 0 2128.6,2370.5 M2118.8,2345.2 A13.5,6.8 62.2 0 0 2131.4,2369.1 M2121.6,2343.7 A13.5,6.8 62.2 0 0 2134.2,2367.6 M2124.4,2342.3 A13.5,6.8 62.2 0 0 2137,2366.1" stroke="#000" stroke-width="1.4" fill="none"/>
<path d="M2378.3,2356.3 L2397.7,2346 A14,7 62.2 0 0 2384.7,2321.3 L2365.2,2331.5 A14,7 62.2 0 0 2378.3,2356.3 Z" stroke="#000" stroke-width="2.8" fill="#fff"/>
<path d="M2378.3,2356.3 A14,7 62.2 0 0 2365.2,2331.5" stroke="#000" stroke-width="1.6" fill="none"/>
<path d="M2368,2330.1 A14,7 62.2 0 0 2381.1,2354.8 M2370.8,2328.6 A14,7 62.2 0 0 2383.9,2353.4 M2373.6,2327.1 A14,7 62.2 0 0 2386.6,2351.9 M2376.3,2325.7 A14,7 62.2 0 0 2389.4,2350.4 M2379.1,2324.2 A14,7 62.2 0 0 2392.2,2349 M2381.9,2322.7 A14,7 62.2 0 0 2395,2347.5" stroke="#000" stroke-width="1.4" fill="none"/>
<path d="M2367.3,2365.5 L2379.7,2359 A17,8.5 62.2 0 0 2363.8,2328.9 L2351.4,2335.4 A17,8.5 62.2 0 0 2367.3,2365.5 Z" stroke="#000" stroke-width="2.8" fill="#fff"/>
<path d="M2367.3,2365.5 A17,8.5 62.2 0 0 2351.4,2335.4" stroke="#000" stroke-width="1.6" fill="none"/>
<path d="M2349.1,2347.2 L2361.5,2340.7 M2355.1,2359.4 L2367.5,2352.9" stroke="#000" stroke-width="1.1" fill="none"/>
<path d="M2352.6,2367.6 L2365,2361.1 A12,6 62.2 0 0 2353.8,2339.9 L2341.4,2346.4 A12,6 62.2 0 0 2352.6,2367.6 Z" stroke="#000" stroke-width="2.8" fill="#fff"/>
<path d="M2352.6,2367.6 A12,6 62.2 0 0 2341.4,2346.4" stroke="#000" stroke-width="2.8" fill="none"/>
<path d="M2343.9,2345.1 A12,6 62.2 0 0 2355.1,2366.3 M2346.3,2343.8 A12,6 62.2 0 0 2357.6,2365 M2348.8,2342.5 A12,6 62.2 0 0 2360,2363.7 M2351.3,2341.2 A12,6 62.2 0 0 2362.5,2362.4" stroke="#000" stroke-width="1.4" fill="none"/>
<path d="M2351.2,2365 A9,4.5 62.2 0 0 2342.8,2349 A9,4.5 62.2 0 0 2351.2,2365 Z" stroke="#000" stroke-width="1.5" fill="#fff"/>
<path d="M2352.5,2361.8 A7.2,3.6 62.2 0 0 2346.1,2349.7" stroke="#000" stroke-width="1.1" fill="none"/>
<path d="M2433,2328.1 L2450.7,2318.7 A17,8.5 62.2 0 0 2434.8,2288.7 L2417.1,2298 A17,8.5 62.2 0 0 2433,2328.1 Z" stroke="#000" stroke-width="2.8" fill="#fff"/>
<path d="M2433,2328.1 A17,8.5 62.2 0 0 2417.1,2298" stroke="#000" stroke-width="1.6" fill="none"/>
<path d="M2420,2296.5 A17,8.5 62.2 0 0 2435.9,2326.5 M2423,2294.9 A17,8.5 62.2 0 0 2438.9,2325 M2425.9,2293.4 A17,8.5 62.2 0 0 2441.8,2323.4 M2428.9,2291.8 A17,8.5 62.2 0 0 2444.8,2321.9 M2431.8,2290.2 A17,8.5 62.2 0 0 2447.7,2320.3" stroke="#000" stroke-width="1.4" fill="none"/>
<path d="M2421,2341.8 L2436,2333.8 A23.5,11.8 62.2 0 0 2414.1,2292.3 L2399,2300.2 A23.5,11.8 62.2 0 0 2421,2341.8 Z" stroke="#000" stroke-width="2.8" fill="#fff"/>
<path d="M2421,2341.8 A23.5,11.8 62.2 0 0 2399,2300.2" stroke="#000" stroke-width="2.8" fill="none"/>
<path d="M2395.8,2316.6 L2410.8,2308.6 M2404.1,2333.4 L2419.1,2325.5" stroke="#000" stroke-width="1.1" fill="none"/>
<path d="M2417,2334.3 A15,7.5 62.2 0 0 2403,2307.7 A15,7.5 62.2 0 0 2417,2334.3 Z" stroke="#000" stroke-width="1.5" fill="#fff"/>
<path d="M2418.2,2329.5 A12,6 62.2 0 0 2407.6,2309.4" stroke="#000" stroke-width="1.1" fill="none"/>
<path d="M2471.7,2301.7 L2478.8,2298 A15.5,7.8 62.2 0 0 2464.3,2270.6 L2457.3,2274.3 A15.5,7.8 62.2 0 0 2471.7,2301.7 Z" stroke="#000" stroke-width="2.6" fill="#fff"/>
<path d="M2471.7,2301.7 A15.5,7.8 62.2 0 0 2457.3,2274.3" stroke="#000" stroke-width="2.6" fill="none"/>
<clipPath id="m26"><ellipse cx="2464.5" cy="2288" rx="6.5" ry="13" transform="rotate(28 2464.5 2288)"/></clipPath>
<path d="M2432.5,2268 l0,40 M2445,2256 l40,0 M2436.5,2268 l0,40 M2445,2260 l40,0 M2440.5,2268 l0,40 M2445,2264 l40,0 M2444.5,2268 l0,40 M2445,2268 l40,0 M2448.5,2268 l0,40 M2445,2272 l40,0 M2452.5,2268 l0,40 M2445,2276 l40,0 M2456.5,2268 l0,40 M2445,2280 l40,0 M2460.5,2268 l0,40 M2445,2284 l40,0 M2464.5,2268 l0,40 M2445,2288 l40,0 M2468.5,2268 l0,40 M2445,2292 l40,0 M2472.5,2268 l0,40 M2445,2296 l40,0 M2476.5,2268 l0,40 M2445,2300 l40,0 M2480.5,2268 l0,40 M2445,2304 l40,0 M2484.5,2268 l0,40 M2445,2308 l40,0 M2488.5,2268 l0,40 M2445,2312 l40,0 M2492.5,2268 l0,40 M2445,2316 l40,0 M2496.5,2268 l0,40 M2445,2320 l40,0" stroke="#000" stroke-width="0.9" clip-path="url(#m26)"/>
<clipPath id="b23"><path d="M2222,2412 L2246,2390 L2268,2402 L2262,2420 L2240,2432 Z"/></clipPath>
<path d="M2238.1,2430.5 L2261.1,2418.3 A13,6.5 62.2 0 0 2248.9,2395.4 L2225.9,2407.5 A13,6.5 62.2 0 0 2238.1,2430.5 Z" stroke="#000" stroke-width="2.8" fill="#fff"/>
<path d="M2238.1,2430.5 A13,6.5 62.2 0 0 2225.9,2407.5" stroke="#000" stroke-width="2.8" fill="none"/>
<path d="M2165,2380 l30,60 M2195,2380 l-30,60 M2170,2380 l30,60 M2200,2380 l-30,60 M2175,2380 l30,60 M2205,2380 l-30,60 M2180,2380 l30,60 M2210,2380 l-30,60 M2185,2380 l30,60 M2215,2380 l-30,60 M2190,2380 l30,60 M2220,2380 l-30,60 M2195,2380 l30,60 M2225,2380 l-30,60 M2200,2380 l30,60 M2230,2380 l-30,60 M2205,2380 l30,60 M2235,2380 l-30,60 M2210,2380 l30,60 M2240,2380 l-30,60 M2215,2380 l30,60 M2245,2380 l-30,60 M2220,2380 l30,60 M2250,2380 l-30,60 M2225,2380 l30,60 M2255,2380 l-30,60 M2230,2380 l30,60 M2260,2380 l-30,60 M2235,2380 l30,60 M2265,2380 l-30,60 M2240,2380 l30,60 M2270,2380 l-30,60 M2245,2380 l30,60 M2275,2380 l-30,60 M2250,2380 l30,60 M2280,2380 l-30,60 M2255,2380 l30,60 M2285,2380 l-30,60 M2260,2380 l30,60 M2290,2380 l-30,60 M2265,2380 l30,60 M2295,2380 l-30,60 M2270,2380 l30,60 M2300,2380 l-30,60 M2275,2380 l30,60 M2305,2380 l-30,60 M2280,2380 l30,60 M2310,2380 l-30,60" stroke="#000" stroke-width="1.3" clip-path="url(#b23)"/>
<path d="M2314.4,2398.7 L2339.2,2385.6 A20,10 62.2 0 0 2320.5,2350.2 L2295.7,2363.3 A20,10 62.2 0 0 2314.4,2398.7 Z" stroke="#000" stroke-width="2.8" fill="#fff"/>
<path d="M2314.4,2398.7 A20,10 62.2 0 0 2295.7,2363.3" stroke="#000" stroke-width="1.6" fill="none"/>
<path d="M2293,2377.2 L2317.7,2364.1 M2300,2391.5 L2324.8,2378.5" stroke="#000" stroke-width="1.1" fill="none"/>
<path d="M2302.4,2393.1 L2309.5,2389.4 A9.5,4.8 62.2 0 0 2300.6,2372.6 L2293.5,2376.3 A9.5,4.8 62.2 0 0 2302.4,2393.1 Z" stroke="#000" stroke-width="2.8" fill="#fff"/>
<path d="M2302.4,2393.1 A9.5,4.8 62.2 0 0 2293.5,2376.3" stroke="#000" stroke-width="1.6" fill="none"/>
<path d="M2263,2421.3 L2305.5,2398.9 A16,8 62.2 0 0 2290.5,2370.6 L2248.1,2393 A16,8 62.2 0 0 2263,2421.3 Z" stroke="#000" stroke-width="2.8" fill="#fff"/>
<path d="M2263,2421.3 A16,8 62.2 0 0 2248.1,2393" stroke="#000" stroke-width="1.6" fill="none"/>
<path d="M2259.9,2424 L2263.5,2422.2 A17,8.5 62.2 0 0 2247.6,2392.1 L2244.1,2394 A17,8.5 62.2 0 0 2259.9,2424 Z" stroke="#000" stroke-width="2.8" fill="#fff"/>
<path d="M2259.9,2424 A17,8.5 62.2 0 0 2244.1,2394" stroke="#000" stroke-width="2.8" fill="none"/>
<path d="M2236,2408 Q2222,2414 2226,2428 Q2230,2434 2237,2431" stroke="#000" stroke-width="2.4" fill="#fff"/>
</g>
<g id="part9">
<path d="M2677.1,928.3 L2707.5,910.9 A48,26.4 60.2 0 0 2659.7,827.6 L2629.4,845 A48,26.4 60.2 0 0 2677.1,928.3 Z" stroke="#000" stroke-width="2.6" fill="#fff"/>
<path d="M2677.1,928.3 A48,26.4 60.2 0 0 2629.4,845" stroke="#000" stroke-width="1.5" fill="none"/>
<path d="M2678.6,927.3 L2709,909.9 M2680.6,925.6 L2710.9,908.2 M2682.2,923.5 L2712.6,906.1 M2683.6,921.1 L2714,903.7 M2684.7,918.4 L2715.1,901 M2685.6,915.3 L2715.9,897.9 M2686.1,912 L2716.4,894.6 M2686.3,908.5 L2716.7,891.1 M2686.2,904.8 L2716.6,887.4 M2685.8,900.9 L2716.2,883.5 M2685.2,896.9 L2715.5,879.5 M2684.2,892.8 L2714.5,875.4 M2682.9,888.6 L2713.3,871.2 M2681.4,884.4 L2711.7,867 M2679.6,880.2 L2710,862.8 M2677.5,876.1 L2707.9,858.7 M2675.3,872.1 L2705.7,854.7 M2672.8,868.2 L2703.2,850.8 M2670.2,864.5 L2700.5,847.1 M2667.4,861 L2697.7,843.6 M2664.4,857.8 L2694.8,840.3 M2661.4,854.8 L2691.8,837.3 M2658.3,852 L2688.7,834.6 M2655.1,849.7 L2685.5,832.3 M2652,847.6 L2682.3,830.2 M2648.8,845.9 L2679.2,828.5 M2645.7,844.6 L2676,827.2 M2642.6,843.7 L2673,826.3 M2639.7,843.2 L2670,825.8 M2636.8,843 L2667.2,825.6 M2634.2,843.3 L2664.5,825.9 M2631.7,844 L2662,826.6" stroke="#000" stroke-width="1" fill="none"/>
<path d="M2659,916.8 L2667.7,911.8 A29,16 60.2 0 0 2638.8,861.5 L2630.1,866.5 A29,16 60.2 0 0 2659,916.8 Z" stroke="#000" stroke-width="2.6" fill="#fff"/>
<path d="M2659,916.8 A29,16 60.2 0 0 2630.1,866.5" stroke="#000" stroke-width="1.5" fill="none"/>
<path d="M2648.6,914.7 L2655.5,910.7 A22,12.1 60.2 0 0 2633.6,872.6 L2626.7,876.6 A22,12.1 60.2 0 0 2648.6,914.7 Z" stroke="#000" stroke-width="2.6" fill="#fff"/>
<path d="M2648.6,914.7 A22,12.1 60.2 0 0 2626.7,876.6" stroke="#000" stroke-width="1.5" fill="none"/>
<path d="M2625,921.9 L2645.8,910 A16.5,9.1 60.2 0 0 2629.4,881.3 L2608.6,893.3 A16.5,9.1 60.2 0 0 2625,921.9 Z" stroke="#000" stroke-width="2.6" fill="#fff"/>
<path d="M2625,921.9 A16.5,9.1 60.2 0 0 2608.6,893.3" stroke="#000" stroke-width="1.5" fill="none"/>
<path d="M2622,932.8 L2629,928.8 A24.5,13.5 60.2 0 0 2604.6,886.3 L2597.7,890.3 A24.5,13.5 60.2 0 0 2622,932.8 Z" stroke="#000" stroke-width="2.6" fill="#fff"/>
<path d="M2622,932.8 A24.5,13.5 60.2 0 0 2597.7,890.3" stroke="#000" stroke-width="1.5" fill="none"/>
<path d="M2613.4,933.8 L2620.3,929.8 A21,11.6 60.2 0 0 2599.4,893.3 L2592.5,897.3 A21,11.6 60.2 0 0 2613.4,933.8 Z" stroke="#000" stroke-width="2.6" fill="#fff"/>
<path d="M2613.4,933.8 A21,11.6 60.2 0 0 2592.5,897.3" stroke="#000" stroke-width="1.5" fill="none"/>
<path d="M2604.4,942.3 L2614.8,936.4 A24,13.2 60.2 0 0 2591,894.7 L2580.6,900.7 A24,13.2 60.2 0 0 2604.4,942.3 Z" stroke="#000" stroke-width="2.6" fill="#fff"/>
<path d="M2604.4,942.3 A24,13.2 60.2 0 0 2580.6,900.7" stroke="#000" stroke-width="2.6" fill="none"/>
<path d="M2614.1,935.1 L2621,931.1 A22.5,12.4 60.2 0 0 2598.7,892 L2591.7,896 A22.5,12.4 60.2 0 0 2614.1,935.1 Z" stroke="#000" stroke-width="2.6" fill="#000"/>
<path d="M2614.1,935.1 A22.5,12.4 60.2 0 0 2591.7,896" stroke="#000" stroke-width="2.6" fill="none"/>
<path d="M2604.4,942.3 L2614.8,936.4 A24,13.2 60.2 0 0 2591,894.7 L2580.6,900.7 A24,13.2 60.2 0 0 2604.4,942.3 Z" stroke="#000" stroke-width="2.8" fill="#fff"/>
<path d="M2604.4,942.3 A24,13.2 60.2 0 0 2580.6,900.7" stroke="#000" stroke-width="2.8" fill="none"/>
<path d="M2585,912 Q2599,914 2599.500,925.500 Q2599.5,932 2596.500,936" stroke="#000" stroke-width="2.3" fill="none"/>
</g>
<g id="labels">
<text x="674" y="733.6" font-size="42" text-anchor="middle" fill="#000" stroke="none">1</text>
<text x="697.6" y="776" font-size="42" text-anchor="middle" fill="#000" stroke="none">19</text>
<text x="733" y="808.8" font-size="42" text-anchor="middle" fill="#000" stroke="none">2</text>
<text x="870.4" y="1238.7" font-size="42" text-anchor="middle" fill="#000" stroke="none">3</text>
<text x="924.9" y="1289" font-size="42" text-anchor="middle" fill="#000" stroke="none">4</text>
<text x="856.2" y="1289" font-size="42" text-anchor="middle" fill="#000" stroke="none">5</text>
<text x="601.3" y="1479.3" font-size="42" text-anchor="middle" fill="#000" stroke="none">6</text>
<text x="742" y="1564" font-size="42" text-anchor="middle" fill="#000" stroke="none">8</text>
<text x="848" y="1622.5" font-size="42" text-anchor="middle" fill="#000" stroke="none">6</text>
<text x="633.4" y="1570.7" font-size="42" text-anchor="middle" fill="#000" stroke="none">28</text>
<text x="633.4" y="1617.5" font-size="42" text-anchor="middle" fill="#000" stroke="none">27</text>
<text x="1170.2" y="1434.8" font-size="42" text-anchor="middle" fill="#000" stroke="none">11</text>
<text x="1223" y="1405.3" font-size="42" text-anchor="middle" fill="#000" stroke="none">10</text>
<text x="1658.9" y="2307.7" font-size="42" text-anchor="middle" fill="#000" stroke="none">12</text>
<text x="1658.9" y="2374.2" font-size="42" text-anchor="middle" fill="#000" stroke="none">13</text>
<text x="1513.1" y="2520.8" font-size="42" text-anchor="middle" fill="#000" stroke="none">14</text>
<text x="1590" y="2562.7" font-size="42" text-anchor="middle" fill="#000" stroke="none">15</text>
<text x="1665" y="2603.3" font-size="42" text-anchor="middle" fill="#000" stroke="none">16</text>
<text x="1974.1" y="2197.3" font-size="42" text-anchor="middle" fill="#000" stroke="none">20</text>
<text x="2160.5" y="2188.7" font-size="42" text-anchor="middle" fill="#000" stroke="none">21</text>
<text x="2227.8" y="2148" font-size="42" text-anchor="middle" fill="#000" stroke="none">22</text>
<text x="1934" y="2363" font-size="42" text-anchor="middle" fill="#000" stroke="none">7</text>
<text x="2138.4" y="2442.4" font-size="42" text-anchor="middle" fill="#000" stroke="none">18</text>
<text x="2059.6" y="2489.2" font-size="42" text-anchor="middle" fill="#000" stroke="none">17</text>
<text x="2294.8" y="2483.7" font-size="42" text-anchor="middle" fill="#000" stroke="none">23</text>
<text x="2366.2" y="2443.9" font-size="42" text-anchor="middle" fill="#000" stroke="none">24</text>
<text x="2429.8" y="2406.5" font-size="42" text-anchor="middle" fill="#000" stroke="none">25</text>
<text x="2479.5" y="2375.8" font-size="42" text-anchor="middle" fill="#000" stroke="none">26</text>
<text x="2662.5" y="800.4" font-size="42" text-anchor="middle" fill="#000" stroke="none">9</text>
<path d="M691.3,721.4 L728,721.4" stroke="#000" stroke-width="1.6"/>
<path d="M719,761.5 L768,761.5" stroke="#000" stroke-width="1.6"/>
<path d="M751,792.4 L783,792.4" stroke="#000" stroke-width="1.6"/>
<path d="M887.7,1221.6 L932.4,1221.6" stroke="#000" stroke-width="1.6"/>
<path d="M940.5,1274.9 L985.2,1274.9" stroke="#000" stroke-width="1.6"/>
<path d="M853.5,1290 L853.5,1323.6" stroke="#000" stroke-width="1.6"/>
<path d="M599.9,1396 L599.9,1445.8" stroke="#000" stroke-width="1.6"/>
<path d="M741.5,1478.3 L741.5,1527" stroke="#000" stroke-width="1.6"/>
<path d="M844.7,1537.2 L844.7,1587" stroke="#000" stroke-width="1.6"/>
<path d="M552,1555 L608,1555" stroke="#000" stroke-width="1.6"/>
<path d="M1169.2,1373.8 L1169.2,1399.2" stroke="#000" stroke-width="1.6"/>
<path d="M1218.5,1346.4 L1218.5,1370.8" stroke="#000" stroke-width="1.6"/>
<path d="M1609.7,2294.7 L1624.4,2295.4" stroke="#000" stroke-width="1.6"/>
<path d="M1609.2,2362.4 L1625,2362.4" stroke="#000" stroke-width="1.6"/>
<path d="M1507.4,2435.8 L1507.4,2485" stroke="#000" stroke-width="1.6"/>
<path d="M1582,2477.7 L1582,2528.2" stroke="#000" stroke-width="1.6"/>
<path d="M1657.7,2520.8 L1657.7,2571.3" stroke="#000" stroke-width="1.6"/>
<path d="M1969.7,2197.3 L1969.7,2231.8" stroke="#000" stroke-width="1.6"/>
<path d="M2157.6,2190 L2157.6,2224.4" stroke="#000" stroke-width="1.6"/>
<path d="M2227,2150.5 L2227,2183.7" stroke="#000" stroke-width="1.6"/>
<path d="M1947.5,2347 L1969.7,2347" stroke="#000" stroke-width="1.6"/>
<path d="M2134.7,2364.8 L2134.7,2407.9" stroke="#000" stroke-width="1.6"/>
<path d="M2056.3,2407.9 L2056.3,2452.2" stroke="#000" stroke-width="1.6"/>
<path d="M2290.3,2404.9 L2290.3,2448.3" stroke="#000" stroke-width="1.6"/>
<path d="M2361.4,2363.9 L2361.4,2407.9" stroke="#000" stroke-width="1.6"/>
<path d="M2425.5,2326.1 L2425.5,2370.4" stroke="#000" stroke-width="1.6"/>
<path d="M2475.1,2295.6 L2475.1,2340.9" stroke="#000" stroke-width="1.6"/>
<path d="M2659.6,801.3 L2659.6,834.3" stroke="#000" stroke-width="1.6"/>
<path d="M575.5,1594 L597.8,1602 L608,1602.6" stroke="#444" stroke-width="1.4" fill="none"/>
</g>
</svg>
</body>
</html>
